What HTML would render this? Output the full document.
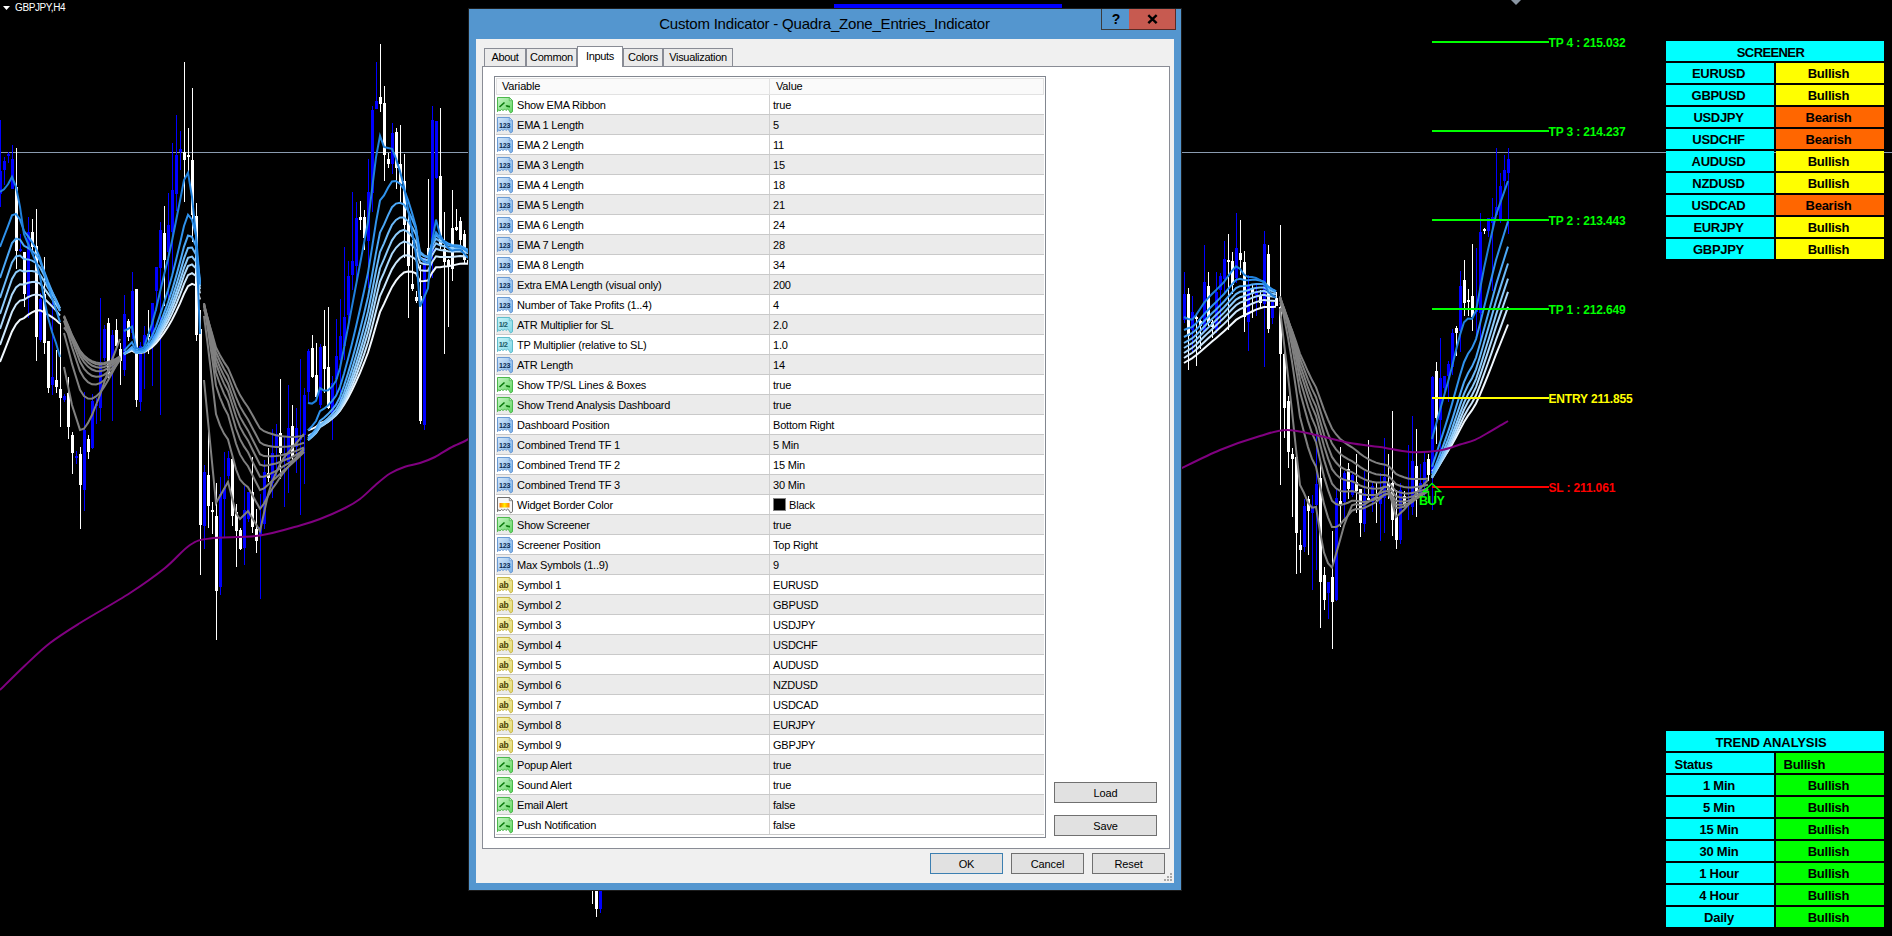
<!DOCTYPE html>
<html><head><meta charset="utf-8"><style>
html,body{margin:0;padding:0;background:#000;}
body{width:1892px;height:936px;overflow:hidden;position:relative;font-family:"Liberation Sans", sans-serif;}
</style></head><body>
<svg width="0" height="0" style="position:absolute"><defs>
<linearGradient id="gB" x1="0" y1="0" x2="1" y2="1"><stop offset="0" stop-color="#c9f5c9"/><stop offset="1" stop-color="#5fd65f"/></linearGradient>
<linearGradient id="gI" x1="0" y1="0" x2="1" y2="1"><stop offset="0" stop-color="#d6e8fa"/><stop offset="1" stop-color="#79aee6"/></linearGradient>
<linearGradient id="gD" x1="0" y1="0" x2="1" y2="1"><stop offset="0" stop-color="#c8f4f8"/><stop offset="1" stop-color="#7fd6e6"/></linearGradient>
<linearGradient id="gS" x1="0" y1="0" x2="1" y2="1"><stop offset="0" stop-color="#fbf6b8"/><stop offset="1" stop-color="#e2d670"/></linearGradient>
<linearGradient id="gC" x1="0" y1="0" x2="1" y2="0"><stop offset="0" stop-color="#ff7a00"/><stop offset=".5" stop-color="#ffee00"/><stop offset="1" stop-color="#ff7a00"/></linearGradient>
</defs></svg>
<svg width="1892" height="936" style="position:absolute;left:0;top:0"><rect x="0" y="152" width="1892" height="1" fill="#8a9bb0"/><rect x="0" y="120" width="1" height="87" fill="#0000ff"/><rect x="-1" y="171" width="3" height="23" fill="#0000ff"/><rect x="4" y="157" width="1" height="28" fill="#0000ff"/><rect x="3" y="161" width="3" height="9" fill="#0000ff"/><rect x="8" y="152" width="1" height="11" fill="#0000ff"/><rect x="7" y="154" width="3" height="2" fill="#0000ff"/><rect x="12" y="145" width="1" height="44" fill="#0000ff"/><rect x="11" y="159" width="3" height="30" fill="#0000ff"/><rect x="16" y="148" width="1" height="121" fill="#ffffff"/><rect x="15" y="187" width="3" height="64" fill="#ffffff"/><rect x="20" y="234" width="1" height="18" fill="#0000ff"/><rect x="19" y="249" width="3" height="2" fill="#0000ff"/><rect x="24" y="252" width="1" height="55" fill="#ffffff"/><rect x="23" y="252" width="3" height="42" fill="#ffffff"/><rect x="28" y="217" width="1" height="101" fill="#0000ff"/><rect x="27" y="232" width="3" height="66" fill="#0000ff"/><rect x="32" y="219" width="1" height="33" fill="#ffffff"/><rect x="31" y="232" width="3" height="15" fill="#ffffff"/><rect x="36" y="209" width="1" height="152" fill="#ffffff"/><rect x="35" y="246" width="3" height="91" fill="#ffffff"/><rect x="40" y="293" width="1" height="49" fill="#0000ff"/><rect x="39" y="299" width="3" height="41" fill="#0000ff"/><rect x="44" y="257" width="1" height="97" fill="#ffffff"/><rect x="43" y="294" width="3" height="49" fill="#ffffff"/><rect x="48" y="341" width="1" height="52" fill="#ffffff"/><rect x="47" y="341" width="3" height="47" fill="#ffffff"/><rect x="52" y="298" width="1" height="97" fill="#0000ff"/><rect x="51" y="377" width="3" height="8" fill="#0000ff"/><rect x="56" y="350" width="1" height="43" fill="#ffffff"/><rect x="55" y="380" width="3" height="7" fill="#ffffff"/><rect x="60" y="323" width="1" height="104" fill="#ffffff"/><rect x="59" y="389" width="3" height="9" fill="#ffffff"/><rect x="64" y="394" width="1" height="8" fill="#0000ff"/><rect x="63" y="396" width="3" height="4" fill="#0000ff"/><rect x="68" y="377" width="1" height="62" fill="#ffffff"/><rect x="67" y="393" width="3" height="34" fill="#ffffff"/><rect x="72" y="432" width="1" height="42" fill="#ffffff"/><rect x="71" y="435" width="3" height="18" fill="#ffffff"/><rect x="76" y="451" width="1" height="13" fill="#0000ff"/><rect x="75" y="456" width="3" height="2" fill="#0000ff"/><rect x="80" y="447" width="1" height="82" fill="#ffffff"/><rect x="79" y="454" width="3" height="31" fill="#ffffff"/><rect x="84" y="392" width="1" height="119" fill="#0000ff"/><rect x="83" y="430" width="3" height="60" fill="#0000ff"/><rect x="88" y="435" width="1" height="24" fill="#ffffff"/><rect x="87" y="439" width="3" height="13" fill="#ffffff"/><rect x="92" y="394" width="1" height="55" fill="#0000ff"/><rect x="91" y="401" width="3" height="47" fill="#0000ff"/><rect x="96" y="398" width="1" height="26" fill="#0000ff"/><rect x="95" y="404" width="3" height="2" fill="#0000ff"/><rect x="100" y="298" width="1" height="123" fill="#0000ff"/><rect x="99" y="362" width="3" height="46" fill="#0000ff"/><rect x="104" y="325" width="1" height="36" fill="#0000ff"/><rect x="103" y="329" width="3" height="29" fill="#0000ff"/><rect x="108" y="318" width="1" height="60" fill="#ffffff"/><rect x="107" y="323" width="3" height="50" fill="#ffffff"/><rect x="112" y="330" width="1" height="91" fill="#0000ff"/><rect x="111" y="335" width="3" height="27" fill="#0000ff"/><rect x="116" y="319" width="1" height="29" fill="#ffffff"/><rect x="115" y="330" width="3" height="16" fill="#ffffff"/><rect x="120" y="343" width="1" height="42" fill="#ffffff"/><rect x="119" y="349" width="3" height="12" fill="#ffffff"/><rect x="124" y="295" width="1" height="81" fill="#0000ff"/><rect x="123" y="314" width="3" height="56" fill="#0000ff"/><rect x="128" y="319" width="1" height="22" fill="#ffffff"/><rect x="127" y="321" width="3" height="16" fill="#ffffff"/><rect x="132" y="272" width="1" height="67" fill="#0000ff"/><rect x="131" y="291" width="3" height="42" fill="#0000ff"/><rect x="136" y="289" width="1" height="118" fill="#ffffff"/><rect x="135" y="289" width="3" height="111" fill="#ffffff"/><rect x="140" y="342" width="1" height="69" fill="#0000ff"/><rect x="139" y="346" width="3" height="56" fill="#0000ff"/><rect x="144" y="326" width="1" height="63" fill="#0000ff"/><rect x="143" y="335" width="3" height="10" fill="#0000ff"/><rect x="148" y="310" width="1" height="44" fill="#ffffff"/><rect x="147" y="334" width="3" height="3" fill="#ffffff"/><rect x="152" y="303" width="1" height="83" fill="#0000ff"/><rect x="151" y="303" width="3" height="34" fill="#0000ff"/><rect x="156" y="267" width="1" height="44" fill="#0000ff"/><rect x="155" y="267" width="3" height="24" fill="#0000ff"/><rect x="160" y="222" width="1" height="193" fill="#0000ff"/><rect x="159" y="230" width="3" height="38" fill="#0000ff"/><rect x="164" y="206" width="1" height="100" fill="#ffffff"/><rect x="163" y="233" width="3" height="27" fill="#ffffff"/><rect x="168" y="193" width="1" height="108" fill="#0000ff"/><rect x="167" y="225" width="3" height="27" fill="#0000ff"/><rect x="172" y="143" width="1" height="129" fill="#0000ff"/><rect x="171" y="190" width="3" height="42" fill="#0000ff"/><rect x="176" y="115" width="1" height="96" fill="#0000ff"/><rect x="175" y="155" width="3" height="39" fill="#0000ff"/><rect x="180" y="131" width="1" height="39" fill="#0000ff"/><rect x="179" y="149" width="3" height="3" fill="#0000ff"/><rect x="184" y="62" width="1" height="140" fill="#ffffff"/><rect x="183" y="152" width="3" height="8" fill="#ffffff"/><rect x="188" y="128" width="1" height="46" fill="#ffffff"/><rect x="187" y="155" width="3" height="2" fill="#ffffff"/><rect x="192" y="88" width="1" height="154" fill="#ffffff"/><rect x="191" y="160" width="3" height="55" fill="#ffffff"/><rect x="196" y="203" width="1" height="138" fill="#ffffff"/><rect x="195" y="216" width="3" height="119" fill="#ffffff"/><rect x="200" y="310" width="1" height="265" fill="#ffffff"/><rect x="199" y="329" width="3" height="196" fill="#ffffff"/><rect x="204" y="465" width="1" height="84" fill="#0000ff"/><rect x="203" y="472" width="3" height="54" fill="#0000ff"/><rect x="208" y="428" width="1" height="100" fill="#ffffff"/><rect x="207" y="475" width="3" height="31" fill="#ffffff"/><rect x="212" y="502" width="1" height="32" fill="#ffffff"/><rect x="211" y="510" width="3" height="2" fill="#ffffff"/><rect x="216" y="483" width="1" height="157" fill="#ffffff"/><rect x="215" y="516" width="3" height="75" fill="#ffffff"/><rect x="220" y="477" width="1" height="118" fill="#0000ff"/><rect x="219" y="494" width="3" height="93" fill="#0000ff"/><rect x="224" y="452" width="1" height="85" fill="#0000ff"/><rect x="223" y="488" width="3" height="11" fill="#0000ff"/><rect x="228" y="451" width="1" height="28" fill="#0000ff"/><rect x="227" y="458" width="3" height="18" fill="#0000ff"/><rect x="232" y="454" width="1" height="72" fill="#ffffff"/><rect x="231" y="459" width="3" height="57" fill="#ffffff"/><rect x="236" y="504" width="1" height="63" fill="#ffffff"/><rect x="235" y="512" width="3" height="19" fill="#ffffff"/><rect x="240" y="528" width="1" height="22" fill="#ffffff"/><rect x="239" y="530" width="3" height="19" fill="#ffffff"/><rect x="244" y="486" width="1" height="79" fill="#0000ff"/><rect x="243" y="510" width="3" height="38" fill="#0000ff"/><rect x="248" y="492" width="1" height="30" fill="#0000ff"/><rect x="247" y="492" width="3" height="27" fill="#0000ff"/><rect x="252" y="457" width="1" height="76" fill="#ffffff"/><rect x="251" y="492" width="3" height="35" fill="#ffffff"/><rect x="256" y="509" width="1" height="44" fill="#ffffff"/><rect x="255" y="529" width="3" height="12" fill="#ffffff"/><rect x="260" y="494" width="1" height="105" fill="#0000ff"/><rect x="259" y="527" width="3" height="8" fill="#0000ff"/><rect x="264" y="460" width="1" height="69" fill="#0000ff"/><rect x="263" y="472" width="3" height="52" fill="#0000ff"/><rect x="268" y="448" width="1" height="34" fill="#ffffff"/><rect x="267" y="473" width="3" height="5" fill="#ffffff"/><rect x="272" y="429" width="1" height="69" fill="#0000ff"/><rect x="271" y="453" width="3" height="30" fill="#0000ff"/><rect x="276" y="424" width="1" height="54" fill="#0000ff"/><rect x="275" y="434" width="3" height="13" fill="#0000ff"/><rect x="280" y="379" width="1" height="100" fill="#ffffff"/><rect x="279" y="433" width="3" height="20" fill="#ffffff"/><rect x="284" y="437" width="1" height="70" fill="#0000ff"/><rect x="283" y="457" width="3" height="2" fill="#0000ff"/><rect x="288" y="385" width="1" height="108" fill="#0000ff"/><rect x="287" y="428" width="3" height="34" fill="#0000ff"/><rect x="292" y="405" width="1" height="56" fill="#ffffff"/><rect x="291" y="426" width="3" height="31" fill="#ffffff"/><rect x="296" y="408" width="1" height="65" fill="#0000ff"/><rect x="295" y="428" width="3" height="19" fill="#0000ff"/><rect x="300" y="359" width="1" height="156" fill="#0000ff"/><rect x="299" y="438" width="3" height="2" fill="#0000ff"/><rect x="304" y="388" width="1" height="96" fill="#0000ff"/><rect x="303" y="395" width="3" height="40" fill="#0000ff"/><rect x="308" y="349" width="1" height="54" fill="#0000ff"/><rect x="307" y="351" width="3" height="41" fill="#0000ff"/><rect x="312" y="335" width="1" height="43" fill="#ffffff"/><rect x="311" y="348" width="3" height="29" fill="#ffffff"/><rect x="316" y="343" width="1" height="58" fill="#ffffff"/><rect x="315" y="375" width="3" height="22" fill="#ffffff"/><rect x="320" y="344" width="1" height="64" fill="#0000ff"/><rect x="319" y="347" width="3" height="58" fill="#0000ff"/><rect x="324" y="310" width="1" height="83" fill="#ffffff"/><rect x="323" y="346" width="3" height="23" fill="#ffffff"/><rect x="328" y="307" width="1" height="102" fill="#ffffff"/><rect x="327" y="367" width="3" height="41" fill="#ffffff"/><rect x="332" y="376" width="1" height="64" fill="#0000ff"/><rect x="331" y="383" width="3" height="31" fill="#0000ff"/><rect x="336" y="319" width="1" height="76" fill="#0000ff"/><rect x="335" y="356" width="3" height="23" fill="#0000ff"/><rect x="340" y="299" width="1" height="108" fill="#0000ff"/><rect x="339" y="336" width="3" height="24" fill="#0000ff"/><rect x="344" y="247" width="1" height="113" fill="#0000ff"/><rect x="343" y="317" width="3" height="29" fill="#0000ff"/><rect x="348" y="261" width="1" height="68" fill="#0000ff"/><rect x="347" y="276" width="3" height="39" fill="#0000ff"/><rect x="352" y="192" width="1" height="98" fill="#0000ff"/><rect x="351" y="261" width="3" height="14" fill="#0000ff"/><rect x="356" y="202" width="1" height="78" fill="#0000ff"/><rect x="355" y="218" width="3" height="48" fill="#0000ff"/><rect x="360" y="201" width="1" height="29" fill="#ffffff"/><rect x="359" y="217" width="3" height="3" fill="#ffffff"/><rect x="364" y="210" width="1" height="40" fill="#ffffff"/><rect x="363" y="217" width="3" height="21" fill="#ffffff"/><rect x="368" y="159" width="1" height="129" fill="#0000ff"/><rect x="367" y="192" width="3" height="49" fill="#0000ff"/><rect x="372" y="106" width="1" height="106" fill="#0000ff"/><rect x="371" y="110" width="3" height="83" fill="#0000ff"/><rect x="376" y="62" width="1" height="47" fill="#0000ff"/><rect x="375" y="101" width="3" height="8" fill="#0000ff"/><rect x="380" y="44" width="1" height="68" fill="#ffffff"/><rect x="379" y="97" width="3" height="7" fill="#ffffff"/><rect x="384" y="86" width="1" height="95" fill="#ffffff"/><rect x="383" y="103" width="3" height="52" fill="#ffffff"/><rect x="388" y="153" width="1" height="15" fill="#ffffff"/><rect x="387" y="159" width="3" height="5" fill="#ffffff"/><rect x="392" y="123" width="1" height="51" fill="#0000ff"/><rect x="391" y="133" width="3" height="31" fill="#0000ff"/><rect x="396" y="128" width="1" height="61" fill="#ffffff"/><rect x="395" y="132" width="3" height="36" fill="#ffffff"/><rect x="400" y="125" width="1" height="77" fill="#ffffff"/><rect x="399" y="164" width="3" height="20" fill="#ffffff"/><rect x="404" y="154" width="1" height="104" fill="#ffffff"/><rect x="403" y="181" width="3" height="44" fill="#ffffff"/><rect x="408" y="215" width="1" height="103" fill="#ffffff"/><rect x="407" y="222" width="3" height="44" fill="#ffffff"/><rect x="412" y="240" width="1" height="51" fill="#ffffff"/><rect x="411" y="284" width="3" height="5" fill="#ffffff"/><rect x="416" y="291" width="1" height="12" fill="#ffffff"/><rect x="415" y="297" width="3" height="4" fill="#ffffff"/><rect x="420" y="265" width="1" height="159" fill="#ffffff"/><rect x="419" y="296" width="3" height="125" fill="#ffffff"/><rect x="424" y="258" width="1" height="172" fill="#0000ff"/><rect x="423" y="258" width="3" height="167" fill="#0000ff"/><rect x="428" y="179" width="1" height="78" fill="#ffffff"/><rect x="427" y="248" width="3" height="7" fill="#ffffff"/><rect x="432" y="106" width="1" height="172" fill="#0000ff"/><rect x="431" y="120" width="3" height="135" fill="#0000ff"/><rect x="436" y="150" width="1" height="29" fill="#0000ff"/><rect x="435" y="121" width="3" height="57" fill="#0000ff"/><rect x="440" y="108" width="1" height="141" fill="#ffffff"/><rect x="439" y="176" width="3" height="70" fill="#ffffff"/><rect x="444" y="212" width="1" height="142" fill="#ffffff"/><rect x="443" y="249" width="3" height="13" fill="#ffffff"/><rect x="448" y="259" width="1" height="68" fill="#ffffff"/><rect x="447" y="260" width="3" height="6" fill="#ffffff"/><rect x="452" y="190" width="1" height="91" fill="#ffffff"/><rect x="451" y="228" width="3" height="41" fill="#ffffff"/><rect x="456" y="209" width="1" height="22" fill="#ffffff"/><rect x="455" y="227" width="3" height="3" fill="#ffffff"/><rect x="460" y="217" width="1" height="35" fill="#ffffff"/><rect x="459" y="221" width="3" height="19" fill="#ffffff"/><rect x="464" y="230" width="1" height="34" fill="#ffffff"/><rect x="463" y="234" width="3" height="26" fill="#ffffff"/><rect x="468" y="215" width="1" height="80" fill="#ffffff"/><rect x="467" y="260" width="3" height="3" fill="#ffffff"/><rect x="472" y="233" width="1" height="38" fill="#ffffff"/><rect x="471" y="253" width="3" height="8" fill="#ffffff"/><path d="M0.0,362.0 L4.0,351.8 L8.0,341.7 L12.0,331.4 L16.0,324.3 L20.0,319.9 L24.0,318.1 L28.0,314.9 L32.0,312.4 L36.0,310.6 L40.0,310.3 L44.0,312.1 L48.0,314.6 L52.0,317.2 L56.0,320.0 L60.0,323.7" stroke="#f2f9ff" stroke-width="2" fill="none"/><path d="M0.0,345.0 L4.0,333.9 L8.0,322.9 L12.0,311.8 L16.0,304.5 L20.0,300.6 L24.0,299.8 L28.0,297.2 L32.0,295.4 L36.0,294.4 L40.0,295.1 L44.0,298.3 L48.0,302.3 L52.0,306.3 L56.0,310.4 L60.0,315.5" stroke="#cde8fd" stroke-width="2" fill="none"/><path d="M0.0,329.0 L4.0,317.4 L8.0,305.9 L12.0,294.4 L16.0,287.4 L20.0,284.2 L24.0,284.6 L28.0,282.8 L32.0,281.9 L36.0,281.8 L40.0,283.6 L44.0,288.2 L48.0,293.7 L52.0,299.0 L56.0,304.3 L60.0,310.8" stroke="#acd9fc" stroke-width="2" fill="none"/><path d="M0.0,314.0 L4.0,302.2 L8.0,290.5 L12.0,278.9 L16.0,272.3 L20.0,270.0 L24.0,271.7 L28.0,270.9 L32.0,270.9 L36.0,271.8 L40.0,274.8 L44.0,280.9 L48.0,287.7 L52.0,294.3 L56.0,300.8 L60.0,308.4" stroke="#8ccbfb" stroke-width="2" fill="none"/><path d="M0.0,298.0 L4.0,286.0 L8.0,274.2 L12.0,262.4 L16.0,256.5 L20.0,255.5 L24.0,259.1 L28.0,259.4 L32.0,260.6 L36.0,262.8 L40.0,267.2 L44.0,275.0 L48.0,283.6 L52.0,291.7 L56.0,299.4 L60.0,308.4" stroke="#6cbaf9" stroke-width="2" fill="none"/><path d="M0.0,278.0 L4.0,266.2 L8.0,254.7 L12.0,243.1 L16.0,238.6 L20.0,239.6 L24.0,245.8 L28.0,247.9 L32.0,250.8 L36.0,254.5 L40.0,260.8 L44.0,270.9 L48.0,281.6 L52.0,291.4 L56.0,300.7 L60.0,311.2" stroke="#4ba7f6" stroke-width="2" fill="none"/><path d="M0.0,247.0 L4.0,236.5 L8.0,226.1 L12.0,215.4 L16.0,213.9 L20.0,219.5 L24.0,231.1 L28.0,236.2 L32.0,242.1 L36.0,248.6 L40.0,257.9 L44.0,271.9 L48.0,285.9 L52.0,298.3 L56.0,309.5 L60.0,322.1" stroke="#2f92ec" stroke-width="2" fill="none"/><path d="M0.0,192.0 L4.0,189.3 L8.0,184.3 L12.0,176.9 L16.0,186.8 L20.0,206.9 L24.0,234.3 L28.0,243.5 L32.0,252.8 L36.0,262.2 L40.0,276.2 L44.0,298.1 L48.0,317.5 L52.0,331.8 L56.0,343.0 L60.0,357.0" stroke="#1f80dc" stroke-width="2" fill="none"/><path d="M64.0,327.3 L68.0,332.8 L72.0,339.1 L76.0,345.0 L80.0,351.3 L84.0,355.6 L88.0,358.8 L92.0,361.1 L96.0,362.4 L100.0,363.2 L104.0,362.9 L108.0,362.0 L112.0,360.6 L116.0,358.8 L120.0,356.5" stroke="#808080" stroke-width="2" fill="none"/><path d="M64.0,320.5 L68.0,327.6 L72.0,335.6 L76.0,342.9 L80.0,350.6 L84.0,355.9 L88.0,359.7 L92.0,362.4 L96.0,364.0 L100.0,364.7 L104.0,364.3 L108.0,363.1 L112.0,361.4 L116.0,359.1 L120.0,356.3" stroke="#808080" stroke-width="2" fill="none"/><path d="M64.0,316.9 L68.0,325.5 L72.0,334.9 L76.0,343.5 L80.0,352.4 L84.0,358.3 L88.0,362.5 L92.0,365.5 L96.0,367.0 L100.0,367.7 L104.0,367.0 L108.0,365.4 L112.0,363.1 L116.0,360.4 L120.0,357.0" stroke="#808080" stroke-width="2" fill="none"/><path d="M64.0,315.6 L68.0,325.4 L72.0,336.1 L76.0,345.8 L80.0,355.7 L84.0,362.1 L88.0,366.6 L92.0,369.5 L96.0,371.0 L100.0,371.3 L104.0,370.2 L108.0,368.1 L112.0,365.3 L116.0,362.0 L120.0,358.0" stroke="#808080" stroke-width="2" fill="none"/><path d="M64.0,316.7 L68.0,328.0 L72.0,340.1 L76.0,350.9 L80.0,361.8 L84.0,368.6 L88.0,373.1 L92.0,375.8 L96.0,376.8 L100.0,376.6 L104.0,374.8 L108.0,371.8 L112.0,368.2 L116.0,364.0 L120.0,359.2" stroke="#808080" stroke-width="2" fill="none"/><path d="M64.0,320.7 L68.0,333.6 L72.0,347.3 L76.0,359.2 L80.0,371.1 L84.0,378.0 L88.0,382.2 L92.0,384.3 L96.0,384.4 L100.0,383.2 L104.0,380.2 L108.0,376.0 L112.0,371.2 L116.0,365.9 L120.0,359.9" stroke="#808080" stroke-width="2" fill="none"/><path d="M64.0,332.9 L68.0,348.1 L72.0,363.9 L76.0,377.0 L80.0,389.9 L84.0,396.0 L88.0,398.6 L92.0,398.7 L96.0,396.4 L100.0,392.8 L104.0,387.2 L108.0,380.5 L112.0,373.3 L116.0,365.9 L120.0,357.9" stroke="#808080" stroke-width="2" fill="none"/><path d="M64.0,367.0 L68.0,386.0 L72.0,405.0 L76.0,417.4 L80.0,429.9 L84.0,428.7 L88.0,422.9 L92.0,415.0 L96.0,405.0 L100.0,395.0 L104.0,383.0 L108.0,371.0 L112.0,359.8 L116.0,349.4 L120.0,339.0" stroke="#808080" stroke-width="2" fill="none"/><path d="M124.0,354.1 L128.0,352.4 L132.0,350.7 L136.0,353.0 L140.0,352.9 L144.0,352.3 L148.0,350.0 L152.0,347.2 L156.0,343.4 L160.0,338.4 L164.0,332.9 L168.0,326.8 L172.0,319.9 L176.0,311.9 L180.0,303.3 L184.0,293.9 L188.0,286.1 L192.0,283.8 L196.0,285.4 L200.0,299.4" stroke="#f2f9ff" stroke-width="2" fill="none"/><path d="M124.0,353.4 L128.0,351.4 L132.0,349.4 L136.0,352.3 L140.0,352.2 L144.0,351.6 L148.0,348.9 L152.0,345.5 L156.0,341.0 L160.0,335.3 L164.0,328.8 L168.0,321.7 L172.0,313.7 L176.0,304.5 L180.0,294.6 L184.0,283.8 L188.0,275.2 L192.0,273.1 L196.0,275.8 L200.0,293.4" stroke="#cde8fd" stroke-width="2" fill="none"/><path d="M124.0,353.6 L128.0,351.3 L132.0,349.0 L136.0,352.3 L140.0,352.2 L144.0,351.5 L148.0,348.4 L152.0,344.5 L156.0,339.4 L160.0,332.8 L164.0,325.5 L168.0,317.6 L172.0,308.6 L176.0,298.4 L180.0,287.4 L184.0,275.4 L188.0,266.1 L192.0,264.4 L196.0,268.2 L200.0,289.3" stroke="#acd9fc" stroke-width="2" fill="none"/><path d="M124.0,354.1 L128.0,351.4 L132.0,348.7 L136.0,352.5 L140.0,352.4 L144.0,351.6 L148.0,348.0 L152.0,343.7 L156.0,337.9 L160.0,330.6 L164.0,322.5 L168.0,313.8 L172.0,303.9 L176.0,292.7 L180.0,280.7 L184.0,267.8 L188.0,257.8 L192.0,256.6 L196.0,261.7 L200.0,286.2" stroke="#8ccbfb" stroke-width="2" fill="none"/><path d="M124.0,354.6 L128.0,351.4 L132.0,348.3 L136.0,352.8 L140.0,352.6 L144.0,351.6 L148.0,347.5 L152.0,342.5 L156.0,336.0 L160.0,327.7 L164.0,318.6 L168.0,308.9 L172.0,298.0 L176.0,285.7 L180.0,272.5 L184.0,258.4 L188.0,247.9 L192.0,247.5 L196.0,254.4 L200.0,283.5" stroke="#6cbaf9" stroke-width="2" fill="none"/><path d="M124.0,354.3 L128.0,350.6 L132.0,347.0 L136.0,352.5 L140.0,352.4 L144.0,351.2 L148.0,346.3 L152.0,340.6 L156.0,333.1 L160.0,323.6 L164.0,313.3 L168.0,302.5 L172.0,290.3 L176.0,276.6 L180.0,262.1 L184.0,246.6 L188.0,235.6 L192.0,236.8 L196.0,246.2 L200.0,281.9" stroke="#4ba7f6" stroke-width="2" fill="none"/><path d="M124.0,350.8 L128.0,346.4 L132.0,342.3 L136.0,350.4 L140.0,350.6 L144.0,349.3 L148.0,343.1 L152.0,336.0 L156.0,326.8 L160.0,315.2 L164.0,302.8 L168.0,290.2 L172.0,276.0 L176.0,260.2 L180.0,243.5 L184.0,226.0 L188.0,214.7 L192.0,219.7 L196.0,235.2 L200.0,284.5" stroke="#2f92ec" stroke-width="2" fill="none"/><path d="M124.0,331.0 L128.0,328.8 L132.0,326.6 L136.0,348.0 L140.0,349.1 L144.0,347.1 L148.0,335.5 L152.0,323.8 L156.0,309.3 L160.0,292.0 L164.0,275.0 L168.0,259.0 L172.0,241.0 L176.0,221.0 L180.0,200.8 L184.0,180.0 L188.0,172.8 L192.0,196.8 L196.0,235.3 L200.0,334.0" stroke="#1f80dc" stroke-width="2" fill="none"/><path d="M204.0,309.3 L208.0,320.4 L212.0,333.2 L216.0,347.5 L220.0,355.2 L224.0,362.1 L228.0,368.1 L232.0,377.3 L236.0,386.9 L240.0,395.1 L244.0,401.5 L248.0,407.3 L252.0,414.3 L256.0,421.4 L260.0,428.4 L264.0,431.2 L268.0,432.8 L272.0,434.0 L276.0,435.3 L280.0,436.0 L284.0,436.4 L288.0,436.8 L292.0,436.9 L296.0,436.8 L300.0,436.3 L304.0,435.7" stroke="#808080" stroke-width="2" fill="none"/><path d="M204.0,305.7 L208.0,319.3 L212.0,334.8 L216.0,352.1 L220.0,361.0 L224.0,368.9 L228.0,375.7 L232.0,386.3 L236.0,397.2 L240.0,406.4 L244.0,413.3 L248.0,419.5 L252.0,427.2 L256.0,434.8 L260.0,442.4 L264.0,444.8 L268.0,445.7 L272.0,446.4 L276.0,447.0 L280.0,447.0 L284.0,446.8 L288.0,446.6 L292.0,446.1 L296.0,445.2 L300.0,444.1 L304.0,442.8" stroke="#808080" stroke-width="2" fill="none"/><path d="M204.0,303.9 L208.0,319.8 L212.0,337.7 L216.0,357.5 L220.0,367.5 L224.0,376.1 L228.0,383.4 L232.0,395.1 L236.0,407.0 L240.0,416.9 L244.0,424.1 L248.0,430.4 L252.0,438.5 L256.0,446.4 L260.0,454.2 L264.0,456.1 L268.0,456.3 L272.0,456.2 L276.0,456.1 L280.0,455.4 L284.0,454.5 L288.0,453.6 L292.0,452.4 L296.0,451.0 L300.0,449.2 L304.0,447.3" stroke="#808080" stroke-width="2" fill="none"/><path d="M204.0,303.1 L208.0,321.3 L212.0,341.5 L216.0,363.7 L220.0,374.4 L224.0,383.6 L228.0,391.2 L232.0,403.7 L236.0,416.5 L240.0,426.9 L244.0,434.2 L248.0,440.4 L252.0,448.7 L256.0,456.8 L260.0,464.7 L264.0,465.8 L268.0,465.2 L272.0,464.3 L276.0,463.5 L280.0,462.0 L284.0,460.4 L288.0,458.8 L292.0,457.0 L296.0,454.9 L300.0,452.6 L304.0,450.0" stroke="#808080" stroke-width="2" fill="none"/><path d="M204.0,303.4 L208.0,324.4 L212.0,347.5 L216.0,372.5 L220.0,384.0 L224.0,393.6 L228.0,401.4 L232.0,414.8 L236.0,428.5 L240.0,439.2 L244.0,446.4 L248.0,452.3 L252.0,460.6 L256.0,468.7 L260.0,476.7 L264.0,476.7 L268.0,474.8 L272.0,472.8 L276.0,471.0 L280.0,468.4 L284.0,465.9 L288.0,463.5 L292.0,460.9 L296.0,458.1 L300.0,455.1 L304.0,451.8" stroke="#808080" stroke-width="2" fill="none"/><path d="M204.0,305.6 L208.0,330.3 L212.0,357.0 L216.0,385.5 L220.0,397.6 L224.0,407.2 L228.0,414.8 L232.0,429.1 L236.0,443.5 L240.0,454.4 L244.0,461.0 L248.0,466.2 L252.0,474.3 L256.0,482.2 L260.0,490.0 L264.0,488.4 L268.0,484.7 L272.0,481.0 L276.0,477.8 L280.0,474.0 L284.0,470.3 L288.0,466.9 L292.0,463.4 L296.0,459.7 L300.0,455.9 L304.0,452.0" stroke="#808080" stroke-width="2" fill="none"/><path d="M204.0,315.8 L208.0,347.0 L212.0,379.8 L216.0,414.0 L220.0,425.4 L224.0,433.6 L228.0,439.4 L232.0,454.3 L236.0,469.3 L240.0,479.5 L244.0,484.1 L248.0,487.2 L252.0,494.5 L256.0,501.7 L260.0,508.8 L264.0,503.5 L268.0,496.1 L272.0,489.2 L276.0,483.7 L280.0,477.5 L284.0,472.0 L288.0,467.2 L292.0,462.5 L296.0,457.7 L300.0,453.0 L304.0,448.3" stroke="#808080" stroke-width="2" fill="none"/><path d="M204.0,380.0 L208.0,421.0 L212.0,462.0 L216.0,503.0 L220.0,496.0 L224.0,489.0 L228.0,482.0 L232.0,497.6 L236.0,513.2 L240.0,519.0 L244.0,515.0 L248.0,511.0 L252.0,517.7 L256.0,524.3 L260.0,531.0 L264.0,513.0 L268.0,495.0 L272.0,481.7 L276.0,473.0 L280.0,464.3 L284.0,457.6 L288.0,452.9 L292.0,448.2 L296.0,443.5 L300.0,438.7 L304.0,434.0" stroke="#808080" stroke-width="2" fill="none"/><path d="M308.0,430.3 L312.0,428.8 L316.0,426.9 L320.0,423.2 L324.0,421.6 L328.0,419.8 L332.0,417.5 L336.0,414.7 L340.0,410.6 L344.0,404.7 L348.0,398.0 L352.0,390.3 L356.0,381.9 L360.0,372.8 L364.0,363.0 L368.0,352.5 L372.0,339.5 L376.0,325.4 L380.0,312.1 L384.0,303.9 L388.0,295.1 L392.0,286.9 L396.0,280.7 L400.0,275.9 L404.0,272.5 L408.0,271.5 L412.0,271.7 L416.0,273.3 L420.0,281.2 L424.0,281.1 L428.0,280.5 L432.0,272.9 L436.0,267.3 L440.0,267.2 L444.0,266.6 L448.0,266.2 L452.0,265.6 L456.0,264.6 L460.0,263.7 L464.0,263.6 L468.0,263.7 L472.0,264.1" stroke="#f2f9ff" stroke-width="2" fill="none"/><path d="M308.0,435.8 L312.0,433.6 L316.0,431.0 L320.0,426.2 L324.0,424.2 L328.0,421.8 L332.0,418.8 L336.0,415.4 L340.0,410.4 L344.0,403.3 L348.0,395.2 L352.0,386.2 L356.0,376.4 L360.0,365.7 L364.0,354.3 L368.0,342.3 L372.0,327.3 L376.0,311.1 L380.0,296.1 L384.0,287.3 L388.0,277.8 L392.0,269.1 L396.0,262.8 L400.0,258.3 L404.0,255.4 L408.0,255.3 L412.0,256.8 L416.0,259.7 L420.0,270.2 L424.0,270.8 L428.0,270.7 L432.0,262.3 L436.0,256.3 L440.0,256.9 L444.0,256.9 L448.0,257.1 L452.0,257.0 L456.0,256.4 L460.0,255.9 L464.0,256.3 L468.0,256.9 L472.0,257.9" stroke="#cde8fd" stroke-width="2" fill="none"/><path d="M308.0,438.8 L312.0,436.0 L316.0,432.8 L320.0,427.1 L324.0,424.7 L328.0,421.8 L332.0,418.4 L336.0,414.5 L340.0,408.7 L344.0,400.7 L348.0,391.5 L352.0,381.4 L356.0,370.3 L360.0,358.4 L364.0,345.8 L368.0,332.5 L372.0,315.9 L376.0,298.1 L380.0,281.6 L384.0,272.7 L388.0,262.8 L392.0,253.8 L396.0,247.8 L400.0,243.7 L404.0,241.6 L408.0,242.6 L412.0,245.3 L416.0,249.6 L420.0,262.6 L424.0,263.9 L428.0,264.4 L432.0,255.1 L436.0,248.7 L440.0,250.0 L444.0,250.6 L448.0,251.3 L452.0,251.7 L456.0,251.4 L460.0,251.2 L464.0,252.0 L468.0,253.1 L472.0,254.5" stroke="#acd9fc" stroke-width="2" fill="none"/><path d="M308.0,440.1 L312.0,436.9 L316.0,433.1 L320.0,426.7 L324.0,423.9 L328.0,420.8 L332.0,417.0 L336.0,412.7 L340.0,406.3 L344.0,397.3 L348.0,387.2 L352.0,376.1 L356.0,364.0 L360.0,351.1 L364.0,337.4 L368.0,323.1 L372.0,305.1 L376.0,285.8 L380.0,268.2 L384.0,259.2 L388.0,249.3 L392.0,240.3 L396.0,234.7 L400.0,231.2 L404.0,229.9 L408.0,232.1 L412.0,236.2 L416.0,241.9 L420.0,257.3 L424.0,259.3 L428.0,260.3 L432.0,250.1 L436.0,243.3 L440.0,245.3 L444.0,246.3 L448.0,247.6 L452.0,248.3 L456.0,248.3 L460.0,248.4 L464.0,249.6 L468.0,251.0 L472.0,252.8" stroke="#8ccbfb" stroke-width="2" fill="none"/><path d="M308.0,440.2 L312.0,436.4 L316.0,432.1 L320.0,424.8 L324.0,421.7 L328.0,418.3 L332.0,414.2 L336.0,409.5 L340.0,402.4 L344.0,392.5 L348.0,381.3 L352.0,369.0 L356.0,355.8 L360.0,341.7 L364.0,326.9 L368.0,311.4 L372.0,291.7 L376.0,270.8 L380.0,252.0 L384.0,243.3 L388.0,233.5 L392.0,224.8 L396.0,219.9 L400.0,217.5 L404.0,217.4 L408.0,221.3 L412.0,227.1 L416.0,234.6 L420.0,253.3 L424.0,256.0 L428.0,257.5 L432.0,246.0 L436.0,238.6 L440.0,241.4 L444.0,243.0 L448.0,244.8 L452.0,245.9 L456.0,246.1 L460.0,246.5 L464.0,248.0 L468.0,249.9 L472.0,252.1" stroke="#6cbaf9" stroke-width="2" fill="none"/><path d="M308.0,438.1 L312.0,433.9 L316.0,429.1 L320.0,420.8 L324.0,417.7 L328.0,414.1 L332.0,409.8 L336.0,404.7 L340.0,396.9 L344.0,385.8 L348.0,373.4 L352.0,359.8 L356.0,345.2 L360.0,329.8 L364.0,313.7 L368.0,296.9 L372.0,275.4 L376.0,252.6 L380.0,232.6 L384.0,224.7 L388.0,215.3 L392.0,207.2 L396.0,203.6 L400.0,202.8 L404.0,204.6 L408.0,210.7 L412.0,219.0 L416.0,229.0 L420.0,251.8 L424.0,255.3 L428.0,257.1 L432.0,243.5 L436.0,235.0 L440.0,238.7 L444.0,241.0 L448.0,243.4 L452.0,244.9 L456.0,245.3 L460.0,245.8 L464.0,247.7 L468.0,250.0 L472.0,252.6" stroke="#4ba7f6" stroke-width="2" fill="none"/><path d="M308.0,430.4 L312.0,426.1 L316.0,421.0 L320.0,411.2 L324.0,408.7 L328.0,405.4 L332.0,401.1 L336.0,395.8 L340.0,386.9 L344.0,373.7 L348.0,359.1 L352.0,343.4 L356.0,326.7 L360.0,309.2 L364.0,291.2 L368.0,272.6 L372.0,248.0 L376.0,222.1 L380.0,200.5 L384.0,195.4 L388.0,187.7 L392.0,181.5 L396.0,181.0 L400.0,183.7 L404.0,189.2 L408.0,200.0 L412.0,212.8 L416.0,227.1 L420.0,258.0 L424.0,261.5 L428.0,262.9 L432.0,243.8 L436.0,232.4 L440.0,237.8 L444.0,241.0 L448.0,244.1 L452.0,246.1 L456.0,246.4 L460.0,246.9 L464.0,249.3 L468.0,252.1 L472.0,255.2" stroke="#2f92ec" stroke-width="2" fill="none"/><path d="M308.0,403.0 L312.0,403.6 L316.0,400.8 L320.0,388.0 L324.0,390.7 L328.0,390.2 L332.0,386.7 L336.0,380.8 L340.0,368.0 L344.0,348.0 L348.0,327.4 L352.0,306.4 L356.0,285.3 L360.0,264.2 L364.0,243.1 L368.0,222.0 L372.0,189.6 L376.0,157.3 L380.0,135.8 L384.0,147.0 L388.0,147.9 L392.0,148.8 L396.0,158.6 L400.0,171.4 L404.0,186.6 L408.0,209.1 L412.0,231.5 L416.0,254.0 L420.0,306.7 L424.0,297.5 L428.0,288.3 L432.0,241.6 L436.0,219.6 L440.0,234.7 L444.0,242.1 L448.0,248.0 L452.0,250.6 L456.0,249.7 L460.0,249.6 L464.0,253.5 L468.0,257.6 L472.0,262.0" stroke="#1f80dc" stroke-width="2" fill="none"/><rect x="1184" y="272" width="1" height="51" fill="#0000ff"/><rect x="1183" y="294" width="3" height="26" fill="#0000ff"/><rect x="1188" y="288" width="1" height="82" fill="#ffffff"/><rect x="1187" y="294" width="3" height="42" fill="#ffffff"/><rect x="1192" y="296" width="1" height="56" fill="#0000ff"/><rect x="1191" y="312" width="3" height="18" fill="#0000ff"/><rect x="1196" y="313" width="1" height="53" fill="#ffffff"/><rect x="1195" y="317" width="3" height="2" fill="#ffffff"/><rect x="1200" y="319" width="1" height="30" fill="#ffffff"/><rect x="1199" y="321" width="3" height="5" fill="#ffffff"/><rect x="1204" y="245" width="1" height="86" fill="#0000ff"/><rect x="1203" y="282" width="3" height="49" fill="#0000ff"/><rect x="1208" y="272" width="1" height="54" fill="#ffffff"/><rect x="1207" y="286" width="3" height="37" fill="#ffffff"/><rect x="1212" y="320" width="1" height="18" fill="#ffffff"/><rect x="1211" y="322" width="3" height="5" fill="#ffffff"/><rect x="1216" y="272" width="1" height="61" fill="#0000ff"/><rect x="1215" y="292" width="3" height="38" fill="#0000ff"/><rect x="1220" y="273" width="1" height="51" fill="#0000ff"/><rect x="1219" y="276" width="3" height="14" fill="#0000ff"/><rect x="1224" y="241" width="1" height="51" fill="#0000ff"/><rect x="1223" y="259" width="3" height="20" fill="#0000ff"/><rect x="1228" y="234" width="1" height="96" fill="#ffffff"/><rect x="1227" y="260" width="3" height="2" fill="#ffffff"/><rect x="1232" y="252" width="1" height="42" fill="#ffffff"/><rect x="1231" y="261" width="3" height="24" fill="#ffffff"/><rect x="1236" y="213" width="1" height="70" fill="#0000ff"/><rect x="1235" y="248" width="3" height="30" fill="#0000ff"/><rect x="1240" y="220" width="1" height="55" fill="#ffffff"/><rect x="1239" y="253" width="3" height="7" fill="#ffffff"/><rect x="1244" y="251" width="1" height="81" fill="#ffffff"/><rect x="1243" y="262" width="3" height="55" fill="#ffffff"/><rect x="1248" y="275" width="1" height="76" fill="#0000ff"/><rect x="1247" y="285" width="3" height="37" fill="#0000ff"/><rect x="1252" y="285" width="1" height="33" fill="#ffffff"/><rect x="1251" y="289" width="3" height="5" fill="#ffffff"/><rect x="1256" y="285" width="1" height="31" fill="#0000ff"/><rect x="1255" y="293" width="3" height="2" fill="#0000ff"/><rect x="1260" y="290" width="1" height="19" fill="#ffffff"/><rect x="1259" y="295" width="3" height="8" fill="#ffffff"/><rect x="1264" y="231" width="1" height="136" fill="#0000ff"/><rect x="1263" y="244" width="3" height="60" fill="#0000ff"/><rect x="1268" y="245" width="1" height="88" fill="#ffffff"/><rect x="1267" y="254" width="3" height="75" fill="#ffffff"/><rect x="1272" y="302" width="1" height="22" fill="#0000ff"/><rect x="1271" y="302" width="3" height="16" fill="#0000ff"/><rect x="1276" y="292" width="1" height="13" fill="#ffffff"/><rect x="1275" y="298" width="3" height="8" fill="#ffffff"/><rect x="1280" y="225" width="1" height="260" fill="#ffffff"/><rect x="1279" y="307" width="3" height="47" fill="#ffffff"/><rect x="1284" y="346" width="1" height="92" fill="#ffffff"/><rect x="1283" y="354" width="3" height="54" fill="#ffffff"/><rect x="1288" y="396" width="1" height="72" fill="#ffffff"/><rect x="1287" y="401" width="3" height="51" fill="#ffffff"/><rect x="1292" y="448" width="1" height="69" fill="#ffffff"/><rect x="1291" y="454" width="3" height="5" fill="#ffffff"/><rect x="1296" y="450" width="1" height="124" fill="#ffffff"/><rect x="1295" y="457" width="3" height="76" fill="#ffffff"/><rect x="1300" y="530" width="1" height="43" fill="#ffffff"/><rect x="1299" y="545" width="3" height="5" fill="#ffffff"/><rect x="1304" y="499" width="1" height="53" fill="#0000ff"/><rect x="1303" y="506" width="3" height="41" fill="#0000ff"/><rect x="1308" y="496" width="1" height="59" fill="#ffffff"/><rect x="1307" y="499" width="3" height="12" fill="#ffffff"/><rect x="1312" y="495" width="1" height="95" fill="#0000ff"/><rect x="1311" y="507" width="3" height="6" fill="#0000ff"/><rect x="1316" y="433" width="1" height="137" fill="#0000ff"/><rect x="1315" y="484" width="3" height="21" fill="#0000ff"/><rect x="1320" y="460" width="1" height="168" fill="#ffffff"/><rect x="1319" y="478" width="3" height="104" fill="#ffffff"/><rect x="1324" y="567" width="1" height="43" fill="#ffffff"/><rect x="1323" y="575" width="3" height="25" fill="#ffffff"/><rect x="1328" y="582" width="1" height="37" fill="#0000ff"/><rect x="1327" y="582" width="3" height="11" fill="#0000ff"/><rect x="1332" y="531" width="1" height="118" fill="#ffffff"/><rect x="1331" y="577" width="3" height="25" fill="#ffffff"/><rect x="1336" y="488" width="1" height="113" fill="#0000ff"/><rect x="1335" y="498" width="3" height="102" fill="#0000ff"/><rect x="1340" y="447" width="1" height="80" fill="#ffffff"/><rect x="1339" y="501" width="3" height="3" fill="#ffffff"/><rect x="1344" y="471" width="1" height="47" fill="#0000ff"/><rect x="1343" y="473" width="3" height="29" fill="#0000ff"/><rect x="1348" y="463" width="1" height="36" fill="#ffffff"/><rect x="1347" y="469" width="3" height="20" fill="#ffffff"/><rect x="1352" y="472" width="1" height="25" fill="#0000ff"/><rect x="1351" y="475" width="3" height="20" fill="#0000ff"/><rect x="1356" y="454" width="1" height="59" fill="#ffffff"/><rect x="1355" y="482" width="3" height="9" fill="#ffffff"/><rect x="1360" y="489" width="1" height="48" fill="#ffffff"/><rect x="1359" y="489" width="3" height="34" fill="#ffffff"/><rect x="1364" y="471" width="1" height="61" fill="#0000ff"/><rect x="1363" y="493" width="3" height="31" fill="#0000ff"/><rect x="1368" y="440" width="1" height="60" fill="#ffffff"/><rect x="1367" y="498" width="3" height="2" fill="#ffffff"/><rect x="1372" y="481" width="1" height="31" fill="#0000ff"/><rect x="1371" y="486" width="3" height="16" fill="#0000ff"/><rect x="1376" y="483" width="1" height="40" fill="#ffffff"/><rect x="1375" y="497" width="3" height="2" fill="#ffffff"/><rect x="1380" y="473" width="1" height="68" fill="#0000ff"/><rect x="1379" y="492" width="3" height="12" fill="#0000ff"/><rect x="1384" y="438" width="1" height="95" fill="#0000ff"/><rect x="1383" y="477" width="3" height="21" fill="#0000ff"/><rect x="1388" y="454" width="1" height="45" fill="#ffffff"/><rect x="1387" y="483" width="3" height="7" fill="#ffffff"/><rect x="1392" y="411" width="1" height="125" fill="#ffffff"/><rect x="1391" y="483" width="3" height="37" fill="#ffffff"/><rect x="1396" y="490" width="1" height="59" fill="#ffffff"/><rect x="1395" y="516" width="3" height="24" fill="#ffffff"/><rect x="1400" y="483" width="1" height="61" fill="#0000ff"/><rect x="1399" y="490" width="3" height="50" fill="#0000ff"/><rect x="1404" y="491" width="1" height="16" fill="#ffffff"/><rect x="1403" y="496" width="3" height="9" fill="#ffffff"/><rect x="1408" y="445" width="1" height="75" fill="#0000ff"/><rect x="1407" y="500" width="3" height="2" fill="#0000ff"/><rect x="1412" y="416" width="1" height="99" fill="#0000ff"/><rect x="1411" y="461" width="3" height="46" fill="#0000ff"/><rect x="1416" y="429" width="1" height="88" fill="#ffffff"/><rect x="1415" y="466" width="3" height="33" fill="#ffffff"/><rect x="1420" y="464" width="1" height="36" fill="#0000ff"/><rect x="1419" y="483" width="3" height="11" fill="#0000ff"/><rect x="1424" y="452" width="1" height="44" fill="#0000ff"/><rect x="1423" y="462" width="3" height="24" fill="#0000ff"/><rect x="1428" y="454" width="1" height="27" fill="#ffffff"/><rect x="1427" y="459" width="3" height="16" fill="#ffffff"/><rect x="1432" y="376" width="1" height="134" fill="#0000ff"/><rect x="1431" y="377" width="3" height="96" fill="#0000ff"/><rect x="1436" y="362" width="1" height="82" fill="#ffffff"/><rect x="1435" y="371" width="3" height="47" fill="#ffffff"/><rect x="1440" y="338" width="1" height="118" fill="#0000ff"/><rect x="1439" y="378" width="3" height="42" fill="#0000ff"/><rect x="1444" y="376" width="1" height="19" fill="#0000ff"/><rect x="1443" y="376" width="3" height="12" fill="#0000ff"/><rect x="1448" y="361" width="1" height="41" fill="#0000ff"/><rect x="1447" y="364" width="3" height="12" fill="#0000ff"/><rect x="1452" y="329" width="1" height="46" fill="#0000ff"/><rect x="1451" y="333" width="3" height="34" fill="#0000ff"/><rect x="1456" y="326" width="1" height="30" fill="#ffffff"/><rect x="1455" y="328" width="3" height="5" fill="#ffffff"/><rect x="1460" y="271" width="1" height="81" fill="#0000ff"/><rect x="1459" y="286" width="3" height="45" fill="#0000ff"/><rect x="1464" y="260" width="1" height="56" fill="#ffffff"/><rect x="1463" y="280" width="3" height="23" fill="#ffffff"/><rect x="1468" y="289" width="1" height="27" fill="#ffffff"/><rect x="1467" y="300" width="3" height="2" fill="#ffffff"/><rect x="1472" y="244" width="1" height="87" fill="#ffffff"/><rect x="1471" y="296" width="3" height="21" fill="#ffffff"/><rect x="1476" y="248" width="1" height="88" fill="#0000ff"/><rect x="1475" y="310" width="3" height="2" fill="#0000ff"/><rect x="1480" y="213" width="1" height="128" fill="#0000ff"/><rect x="1479" y="232" width="3" height="81" fill="#0000ff"/><rect x="1484" y="228" width="1" height="6" fill="#ffffff"/><rect x="1483" y="229" width="3" height="2" fill="#ffffff"/><rect x="1488" y="218" width="1" height="19" fill="#0000ff"/><rect x="1487" y="218" width="3" height="13" fill="#0000ff"/><rect x="1492" y="198" width="1" height="93" fill="#0000ff"/><rect x="1491" y="217" width="3" height="6" fill="#0000ff"/><rect x="1496" y="148" width="1" height="68" fill="#0000ff"/><rect x="1495" y="207" width="3" height="8" fill="#0000ff"/><rect x="1500" y="173" width="1" height="50" fill="#0000ff"/><rect x="1499" y="186" width="3" height="33" fill="#0000ff"/><rect x="1504" y="155" width="1" height="34" fill="#0000ff"/><rect x="1503" y="170" width="3" height="11" fill="#0000ff"/><rect x="1508" y="148" width="1" height="86" fill="#0000ff"/><rect x="1507" y="159" width="3" height="14" fill="#0000ff"/><path d="M1184.0,363.0 L1188.0,360.5 L1192.0,358.3 L1196.0,355.3 L1200.0,352.0 L1204.0,348.5 L1208.0,345.0 L1212.0,341.6 L1216.0,338.2 L1220.0,334.8 L1224.0,331.3 L1228.0,327.5 L1232.0,323.7 L1236.0,319.9 L1240.0,317.3 L1244.0,315.5 L1248.0,313.5 L1252.0,311.5 L1256.0,309.6 L1260.0,308.2 L1264.0,307.0 L1268.0,307.1 L1272.0,306.9 L1276.0,306.7" stroke="#f2f9ff" stroke-width="2" fill="none"/><path d="M1184.0,358.0 L1188.0,355.4 L1192.0,353.0 L1196.0,349.8 L1200.0,346.1 L1204.0,342.3 L1208.0,338.6 L1212.0,334.9 L1216.0,331.3 L1220.0,327.6 L1224.0,323.9 L1228.0,319.9 L1232.0,315.7 L1236.0,311.7 L1240.0,309.1 L1244.0,307.5 L1248.0,305.7 L1252.0,303.7 L1256.0,302.1 L1260.0,300.9 L1264.0,299.9 L1268.0,300.6 L1272.0,300.7 L1276.0,300.9" stroke="#cde8fd" stroke-width="2" fill="none"/><path d="M1184.0,353.0 L1188.0,350.4 L1192.0,348.0 L1196.0,344.7 L1200.0,340.8 L1204.0,336.8 L1208.0,332.9 L1212.0,329.2 L1216.0,325.4 L1220.0,321.6 L1224.0,317.8 L1228.0,313.6 L1232.0,309.3 L1236.0,305.2 L1240.0,302.6 L1244.0,301.3 L1248.0,299.7 L1252.0,297.9 L1256.0,296.5 L1260.0,295.5 L1264.0,294.8 L1268.0,296.0 L1272.0,296.5 L1276.0,297.1" stroke="#acd9fc" stroke-width="2" fill="none"/><path d="M1184.0,348.0 L1188.0,345.5 L1192.0,343.2 L1196.0,339.8 L1200.0,335.9 L1204.0,331.8 L1208.0,327.9 L1212.0,324.1 L1216.0,320.2 L1220.0,316.4 L1224.0,312.6 L1228.0,308.2 L1232.0,303.8 L1236.0,299.6 L1240.0,297.3 L1244.0,296.2 L1248.0,294.9 L1252.0,293.3 L1256.0,292.1 L1260.0,291.4 L1264.0,290.9 L1268.0,292.7 L1272.0,293.6 L1276.0,294.4" stroke="#8ccbfb" stroke-width="2" fill="none"/><path d="M1184.0,343.0 L1188.0,340.6 L1192.0,338.5 L1196.0,335.1 L1200.0,331.1 L1204.0,326.8 L1208.0,322.8 L1212.0,318.9 L1216.0,315.0 L1220.0,311.2 L1224.0,307.2 L1228.0,302.8 L1232.0,298.3 L1236.0,294.0 L1240.0,291.8 L1244.0,291.2 L1248.0,290.2 L1252.0,288.8 L1256.0,287.9 L1260.0,287.5 L1264.0,287.4 L1268.0,289.8 L1272.0,291.1 L1276.0,292.4" stroke="#6cbaf9" stroke-width="2" fill="none"/><path d="M1184.0,337.0 L1188.0,334.9 L1192.0,333.1 L1196.0,329.7 L1200.0,325.6 L1204.0,321.3 L1208.0,317.2 L1212.0,313.2 L1216.0,309.4 L1220.0,305.5 L1224.0,301.5 L1228.0,296.9 L1232.0,292.3 L1236.0,288.0 L1240.0,286.2 L1244.0,286.1 L1248.0,285.6 L1252.0,284.5 L1256.0,283.9 L1260.0,284.0 L1264.0,284.3 L1268.0,287.5 L1272.0,289.4 L1276.0,291.1" stroke="#4ba7f6" stroke-width="2" fill="none"/><path d="M1184.0,330.0 L1188.0,328.3 L1192.0,327.1 L1196.0,323.6 L1200.0,319.1 L1204.0,314.4 L1208.0,310.1 L1212.0,306.0 L1216.0,302.1 L1220.0,298.1 L1224.0,294.0 L1228.0,289.2 L1232.0,284.3 L1236.0,279.9 L1240.0,278.8 L1244.0,280.0 L1248.0,280.3 L1252.0,279.8 L1256.0,279.7 L1260.0,280.5 L1264.0,281.6 L1268.0,286.3 L1272.0,289.0 L1276.0,291.4" stroke="#2f92ec" stroke-width="2" fill="none"/><path d="M1184.0,317.0 L1188.0,319.0 L1192.0,319.6 L1196.0,315.1 L1200.0,309.0 L1204.0,302.9 L1208.0,298.1 L1212.0,294.0 L1216.0,290.1 L1220.0,286.1 L1224.0,282.0 L1228.0,276.3 L1232.0,270.9 L1236.0,266.4 L1240.0,268.8 L1244.0,274.5 L1248.0,277.0 L1252.0,277.0 L1256.0,277.9 L1260.0,280.1 L1264.0,282.3 L1268.0,291.5 L1272.0,295.2 L1276.0,297.9" stroke="#1f80dc" stroke-width="2" fill="none"/><path d="M1280.0,308.1 L1284.0,314.0 L1288.0,321.2 L1292.0,330.4 L1296.0,341.5 L1300.0,353.8 L1304.0,362.7 L1308.0,371.8 L1312.0,380.1 L1316.0,387.3 L1320.0,398.4 L1324.0,409.6 L1328.0,419.6 L1332.0,428.5 L1336.0,434.2 L1340.0,438.7 L1344.0,441.9 L1348.0,444.9 L1352.0,447.3 L1356.0,450.3 L1360.0,453.6 L1364.0,456.5 L1368.0,458.8 L1372.0,460.8 L1376.0,462.6 L1380.0,463.7 L1384.0,464.4 L1388.0,465.7 L1392.0,469.5 L1396.0,473.9 L1400.0,475.8 L1404.0,477.3 L1408.0,478.4 L1412.0,478.9 L1416.0,479.1 L1420.0,479.1 L1424.0,478.9 L1428.0,478.4" stroke="#808080" stroke-width="2" fill="none"/><path d="M1280.0,303.0 L1284.0,310.5 L1288.0,319.5 L1292.0,330.7 L1296.0,344.1 L1300.0,358.7 L1304.0,369.1 L1308.0,379.6 L1312.0,389.2 L1316.0,397.2 L1320.0,409.8 L1324.0,422.6 L1328.0,433.7 L1332.0,443.6 L1336.0,449.4 L1340.0,453.7 L1344.0,456.7 L1348.0,459.2 L1352.0,461.1 L1356.0,463.8 L1360.0,466.9 L1364.0,469.4 L1368.0,471.3 L1372.0,472.9 L1376.0,474.2 L1380.0,474.7 L1384.0,474.9 L1388.0,475.7 L1392.0,479.6 L1396.0,484.2 L1400.0,485.7 L1404.0,486.9 L1408.0,487.5 L1412.0,487.5 L1416.0,487.1 L1420.0,486.6 L1424.0,485.8 L1428.0,484.8" stroke="#808080" stroke-width="2" fill="none"/><path d="M1280.0,299.8 L1284.0,308.7 L1288.0,319.3 L1292.0,332.3 L1296.0,347.7 L1300.0,364.5 L1304.0,376.0 L1308.0,387.7 L1312.0,398.1 L1316.0,406.7 L1320.0,420.6 L1324.0,434.5 L1328.0,446.5 L1332.0,456.9 L1336.0,462.5 L1340.0,466.6 L1344.0,468.9 L1348.0,470.9 L1352.0,472.1 L1356.0,474.5 L1360.0,477.1 L1364.0,479.2 L1368.0,480.7 L1372.0,481.8 L1376.0,482.6 L1380.0,482.5 L1384.0,482.0 L1388.0,482.4 L1392.0,486.4 L1396.0,491.3 L1400.0,492.4 L1404.0,493.3 L1408.0,493.5 L1412.0,493.0 L1416.0,492.1 L1420.0,491.1 L1424.0,489.8 L1428.0,488.3" stroke="#808080" stroke-width="2" fill="none"/><path d="M1280.0,297.8 L1284.0,308.1 L1288.0,320.2 L1292.0,334.9 L1296.0,352.2 L1300.0,370.8 L1304.0,383.3 L1308.0,395.9 L1312.0,407.0 L1316.0,416.0 L1320.0,431.0 L1324.0,445.8 L1328.0,458.4 L1332.0,469.2 L1336.0,474.4 L1340.0,477.9 L1344.0,479.6 L1348.0,480.8 L1352.0,481.3 L1356.0,483.1 L1360.0,485.4 L1364.0,487.0 L1368.0,488.0 L1372.0,488.5 L1376.0,488.8 L1380.0,488.2 L1384.0,487.1 L1388.0,487.1 L1392.0,491.2 L1396.0,496.3 L1400.0,497.2 L1404.0,497.7 L1408.0,497.5 L1412.0,496.6 L1416.0,495.3 L1420.0,493.8 L1424.0,492.2 L1428.0,490.3" stroke="#808080" stroke-width="2" fill="none"/><path d="M1280.0,296.5 L1284.0,308.6 L1288.0,322.5 L1292.0,339.3 L1296.0,358.8 L1300.0,379.7 L1304.0,393.3 L1308.0,406.8 L1312.0,418.5 L1316.0,427.7 L1320.0,443.8 L1324.0,459.7 L1328.0,472.8 L1332.0,483.7 L1336.0,488.3 L1340.0,490.9 L1344.0,491.4 L1348.0,491.6 L1352.0,491.1 L1356.0,492.1 L1360.0,493.8 L1364.0,494.8 L1368.0,495.1 L1372.0,495.0 L1376.0,494.7 L1380.0,493.3 L1384.0,491.5 L1388.0,491.0 L1392.0,495.4 L1396.0,500.8 L1400.0,501.4 L1404.0,501.5 L1408.0,500.9 L1412.0,499.5 L1416.0,497.6 L1420.0,495.7 L1424.0,493.6 L1428.0,491.2" stroke="#808080" stroke-width="2" fill="none"/><path d="M1280.0,296.2 L1284.0,310.6 L1288.0,326.8 L1292.0,346.3 L1296.0,368.6 L1300.0,392.1 L1304.0,406.7 L1308.0,421.1 L1312.0,433.2 L1316.0,442.2 L1320.0,459.6 L1324.0,476.5 L1328.0,489.9 L1332.0,500.8 L1336.0,504.0 L1340.0,505.1 L1344.0,504.0 L1348.0,502.7 L1352.0,500.7 L1356.0,500.7 L1360.0,501.6 L1364.0,501.9 L1368.0,501.3 L1372.0,500.4 L1376.0,499.3 L1380.0,497.1 L1384.0,494.6 L1388.0,493.6 L1392.0,498.4 L1396.0,504.5 L1400.0,504.7 L1404.0,504.5 L1408.0,503.4 L1412.0,501.4 L1416.0,498.9 L1420.0,496.5 L1424.0,493.9 L1428.0,491.1" stroke="#808080" stroke-width="2" fill="none"/><path d="M1280.0,298.0 L1284.0,316.9 L1288.0,337.6 L1292.0,361.7 L1296.0,388.8 L1300.0,416.9 L1304.0,432.2 L1308.0,447.1 L1312.0,458.9 L1316.0,466.7 L1320.0,485.7 L1324.0,503.9 L1328.0,517.3 L1332.0,527.1 L1336.0,527.1 L1340.0,524.7 L1344.0,520.0 L1348.0,515.6 L1352.0,510.7 L1356.0,509.1 L1360.0,508.9 L1364.0,508.0 L1368.0,506.2 L1372.0,504.2 L1376.0,502.2 L1380.0,498.8 L1384.0,495.1 L1388.0,493.7 L1392.0,500.1 L1396.0,507.9 L1400.0,507.6 L1404.0,506.8 L1408.0,505.0 L1412.0,502.1 L1416.0,498.7 L1420.0,495.5 L1424.0,492.2 L1428.0,488.7" stroke="#808080" stroke-width="2" fill="none"/><path d="M1280.0,309.0 L1284.0,343.1 L1288.0,375.7 L1292.0,411.2 L1296.0,449.0 L1300.0,485.0 L1304.0,493.0 L1308.0,502.5 L1312.0,507.7 L1316.0,507.0 L1320.0,531.6 L1324.0,552.6 L1328.0,563.1 L1332.0,567.6 L1336.0,554.1 L1340.0,540.3 L1344.0,525.7 L1348.0,514.9 L1352.0,505.4 L1356.0,504.0 L1360.0,505.3 L1364.0,504.7 L1368.0,502.1 L1372.0,499.6 L1376.0,497.0 L1380.0,491.9 L1384.0,486.8 L1388.0,486.8 L1392.0,501.9 L1396.0,517.0 L1400.0,513.4 L1404.0,509.8 L1408.0,505.1 L1412.0,499.3 L1416.0,493.5 L1420.0,488.7 L1424.0,484.4 L1428.0,480.0" stroke="#808080" stroke-width="2" fill="none"/><path d="M1432.0,471.5 L1436.0,467.2 L1440.0,462.2 L1444.0,456.9 L1448.0,451.0 L1452.0,444.4 L1456.0,437.2 L1460.0,429.6 L1464.0,422.0 L1468.0,415.6 L1472.0,410.2 L1476.0,403.5 L1480.0,394.6 L1484.0,385.0 L1488.0,375.1 L1492.0,365.0 L1496.0,354.4 L1500.0,344.5 L1504.0,334.5 L1508.0,324.5" stroke="#f2f9ff" stroke-width="2" fill="none"/><path d="M1432.0,476.0 L1436.0,470.5 L1440.0,464.3 L1444.0,457.7 L1448.0,450.5 L1452.0,442.6 L1456.0,434.0 L1460.0,425.0 L1464.0,416.2 L1468.0,408.9 L1472.0,402.8 L1476.0,395.3 L1480.0,385.1 L1484.0,374.1 L1488.0,363.0 L1492.0,351.6 L1496.0,339.8 L1500.0,328.8 L1504.0,317.8 L1508.0,306.8" stroke="#cde8fd" stroke-width="2" fill="none"/><path d="M1432.0,477.8 L1436.0,471.3 L1440.0,464.0 L1444.0,456.4 L1448.0,448.2 L1452.0,439.2 L1456.0,429.5 L1460.0,419.4 L1464.0,409.6 L1468.0,401.7 L1472.0,395.2 L1476.0,387.1 L1480.0,375.9 L1484.0,363.9 L1488.0,351.9 L1492.0,339.5 L1496.0,326.8 L1500.0,315.1 L1504.0,303.5 L1508.0,291.9" stroke="#acd9fc" stroke-width="2" fill="none"/><path d="M1432.0,478.1 L1436.0,470.6 L1440.0,462.5 L1444.0,453.9 L1448.0,444.8 L1452.0,434.9 L1456.0,424.3 L1460.0,413.3 L1464.0,402.8 L1468.0,394.4 L1472.0,387.6 L1476.0,379.1 L1480.0,367.1 L1484.0,354.3 L1488.0,341.5 L1492.0,328.4 L1496.0,314.9 L1500.0,302.7 L1504.0,290.6 L1508.0,278.6" stroke="#8ccbfb" stroke-width="2" fill="none"/><path d="M1432.0,477.1 L1436.0,468.5 L1440.0,459.3 L1444.0,449.7 L1448.0,439.6 L1452.0,428.8 L1456.0,417.0 L1460.0,405.1 L1464.0,393.8 L1468.0,385.0 L1472.0,378.2 L1476.0,369.3 L1480.0,356.5 L1484.0,342.7 L1488.0,329.1 L1492.0,315.2 L1496.0,301.0 L1500.0,288.4 L1504.0,275.9 L1508.0,263.5" stroke="#6cbaf9" stroke-width="2" fill="none"/><path d="M1432.0,474.3 L1436.0,464.4 L1440.0,454.0 L1444.0,443.3 L1448.0,432.1 L1452.0,420.1 L1456.0,407.3 L1460.0,394.4 L1464.0,382.2 L1468.0,373.3 L1472.0,366.6 L1476.0,357.6 L1480.0,343.8 L1484.0,329.0 L1488.0,314.5 L1492.0,299.9 L1496.0,284.9 L1500.0,271.9 L1504.0,259.2 L1508.0,246.6" stroke="#4ba7f6" stroke-width="2" fill="none"/><path d="M1432.0,466.7 L1436.0,454.9 L1440.0,442.5 L1444.0,430.1 L1448.0,417.4 L1452.0,403.9 L1456.0,389.5 L1460.0,375.2 L1464.0,362.2 L1468.0,353.7 L1472.0,348.1 L1476.0,339.1 L1480.0,323.7 L1484.0,307.4 L1488.0,291.7 L1492.0,276.0 L1496.0,260.0 L1500.0,246.9 L1504.0,234.0 L1508.0,221.4" stroke="#2f92ec" stroke-width="2" fill="none"/><path d="M1432.0,439.0 L1436.0,424.5 L1440.0,410.0 L1444.0,396.0 L1448.0,382.0 L1452.0,366.8 L1456.0,350.3 L1460.0,334.9 L1464.0,322.3 L1468.0,318.5 L1472.0,319.0 L1476.0,310.7 L1480.0,289.5 L1484.0,268.3 L1488.0,249.9 L1492.0,232.5 L1496.0,215.0 L1500.0,203.7 L1504.0,192.3 L1508.0,181.0" stroke="#1f80dc" stroke-width="2" fill="none"/><path d="M0.0,690.0 C4.2,685.9 16.7,673.3 25.0,665.5 C33.3,657.7 40.8,650.1 50.0,643.0 C59.2,635.9 66.7,631.3 80.0,623.0 C93.3,614.7 115.8,602.2 130.0,593.0 C144.2,583.8 155.0,576.0 165.0,568.0 C175.0,560.0 182.5,549.9 190.0,545.0 C197.5,540.1 198.3,540.1 210.0,538.5 C221.7,536.9 245.0,537.7 260.0,535.5 C275.0,533.3 290.0,528.2 300.0,525.5 C310.0,522.8 312.5,521.9 320.0,519.0 C327.5,516.1 338.3,511.3 345.0,508.0 C351.7,504.7 355.0,502.8 360.0,499.0 C365.0,495.2 370.0,489.8 375.0,485.5 C380.0,481.2 385.0,476.6 390.0,473.5 C395.0,470.4 400.0,468.4 405.0,466.7 C410.0,464.9 415.0,464.6 420.0,463.0 C425.0,461.4 430.0,459.5 435.0,457.0 C440.0,454.5 445.0,450.7 450.0,448.0 C455.0,445.3 461.7,442.7 465.0,441.0 C468.3,439.3 469.2,438.5 470.0,438.0" stroke="#800080" stroke-width="2" fill="none"/><path d="M1180.0,469.0 C1186.7,465.8 1206.7,455.5 1220.0,450.0 C1233.3,444.5 1248.8,439.3 1260.0,436.0 C1271.2,432.7 1277.0,430.0 1287.0,430.0 C1297.0,430.0 1309.5,433.8 1320.0,436.0 C1330.5,438.2 1340.0,441.2 1350.0,443.0 C1360.0,444.8 1370.0,445.5 1380.0,447.0 C1390.0,448.5 1400.0,451.4 1410.0,452.0 C1420.0,452.6 1431.7,451.6 1440.0,450.4 C1448.3,449.1 1454.2,446.3 1460.0,444.5 C1465.8,442.7 1470.0,441.9 1475.0,439.8 C1480.0,437.7 1485.8,434.0 1490.0,431.6 C1494.2,429.2 1497.0,427.5 1500.0,425.7 C1503.0,423.9 1506.7,421.8 1508.0,421.0" stroke="#800080" stroke-width="2" fill="none"/><rect x="834" y="4" width="228" height="4" fill="#0000ff"/><path d="M1511,0 L1521,0 L1516,5 Z" fill="#8a96a3"/><path d="M3,6 L10,6 L6.5,10 Z" fill="#ffffff"/><rect x="592" y="891" width="1" height="13" fill="#fff"/><rect x="595" y="891" width="3" height="18" fill="#fff"/><rect x="596" y="891" width="1" height="26" fill="#fff"/><rect x="599" y="891" width="3" height="18" fill="#00f"/><rect x="600" y="891" width="1" height="22" fill="#00f"/><rect x="1432" y="41" width="117" height="2" fill="#00ff00"/><rect x="1432" y="130" width="117" height="2" fill="#00ff00"/><rect x="1432" y="219" width="117" height="2" fill="#00ff00"/><rect x="1432" y="308" width="117" height="2" fill="#00ff00"/><rect x="1432" y="397" width="117" height="2" fill="#ffff00"/><rect x="1432" y="486" width="117" height="2" fill="#ff0000"/><path d="M1428.5,503 L1428.5,491.5 L1423.5,491.5 L1432,483.5 L1440.5,491.5 L1435.5,491.5 L1435.5,503" stroke="#00ff00" stroke-width="1.4" fill="none"/></svg>
<div style="position:absolute;left:15px;top:2.70px;font-size:10px;line-height:10px;color:#fff;font-weight:400;letter-spacing:-0.4px;white-space:nowrap;">GBPJPY,H4</div><div style="position:absolute;left:1548.5px;top:37.03px;font-size:12px;line-height:12px;color:#00ff00;font-weight:700;letter-spacing:-0.15px;white-space:nowrap;">TP 4 : 215.032</div><div style="position:absolute;left:1548.5px;top:126.03px;font-size:12px;line-height:12px;color:#00ff00;font-weight:700;letter-spacing:-0.15px;white-space:nowrap;">TP 3 : 214.237</div><div style="position:absolute;left:1548.5px;top:215.03px;font-size:12px;line-height:12px;color:#00ff00;font-weight:700;letter-spacing:-0.15px;white-space:nowrap;">TP 2 : 213.443</div><div style="position:absolute;left:1548.5px;top:304.03px;font-size:12px;line-height:12px;color:#00ff00;font-weight:700;letter-spacing:-0.15px;white-space:nowrap;">TP 1 : 212.649</div><div style="position:absolute;left:1548.5px;top:393.03px;font-size:12px;line-height:12px;color:#ffff00;font-weight:700;letter-spacing:-0.15px;white-space:nowrap;">ENTRY 211.855</div><div style="position:absolute;left:1548.5px;top:482.03px;font-size:12px;line-height:12px;color:#ff0000;font-weight:700;letter-spacing:-0.15px;white-space:nowrap;">SL : 211.061</div><div style="position:absolute;left:1419px;top:494.62px;font-size:12.5px;line-height:12.5px;color:#00ff00;font-weight:700;letter-spacing:-0.3px;white-space:nowrap;">BUY</div><div style="position:absolute;left:1666px;top:41px;width:218px;height:20px;background:#00ffff;"></div><div style="position:absolute;left:1570.5px;width:400px;text-align:center;top:46.20px;font-size:13px;line-height:13px;color:#000;font-weight:700;letter-spacing:-0.6px;white-space:nowrap">SCREENER</div><div style="position:absolute;left:1666px;top:63px;width:108px;height:20px;background:#00ffff;"></div><div style="position:absolute;left:1776px;top:63px;width:108px;height:20px;background:#ffff00;"></div><div style="position:absolute;left:1518.5px;width:400px;text-align:center;top:67.20px;font-size:13px;line-height:13px;color:#000;font-weight:700;letter-spacing:-0.3px;white-space:nowrap">EURUSD</div><div style="position:absolute;left:1628.5px;width:400px;text-align:center;top:67.20px;font-size:13px;line-height:13px;color:#000;font-weight:700;letter-spacing:-0.25px;white-space:nowrap">Bullish</div><div style="position:absolute;left:1666px;top:85px;width:108px;height:20px;background:#00ffff;"></div><div style="position:absolute;left:1776px;top:85px;width:108px;height:20px;background:#ffff00;"></div><div style="position:absolute;left:1518.5px;width:400px;text-align:center;top:89.20px;font-size:13px;line-height:13px;color:#000;font-weight:700;letter-spacing:-0.3px;white-space:nowrap">GBPUSD</div><div style="position:absolute;left:1628.5px;width:400px;text-align:center;top:89.20px;font-size:13px;line-height:13px;color:#000;font-weight:700;letter-spacing:-0.25px;white-space:nowrap">Bullish</div><div style="position:absolute;left:1666px;top:107px;width:108px;height:20px;background:#00ffff;"></div><div style="position:absolute;left:1776px;top:107px;width:108px;height:20px;background:#ff6600;"></div><div style="position:absolute;left:1518.5px;width:400px;text-align:center;top:111.20px;font-size:13px;line-height:13px;color:#000;font-weight:700;letter-spacing:-0.3px;white-space:nowrap">USDJPY</div><div style="position:absolute;left:1628.5px;width:400px;text-align:center;top:111.20px;font-size:13px;line-height:13px;color:#000;font-weight:700;letter-spacing:-0.25px;white-space:nowrap">Bearish</div><div style="position:absolute;left:1666px;top:129px;width:108px;height:20px;background:#00ffff;"></div><div style="position:absolute;left:1776px;top:129px;width:108px;height:20px;background:#ff6600;"></div><div style="position:absolute;left:1518.5px;width:400px;text-align:center;top:133.20px;font-size:13px;line-height:13px;color:#000;font-weight:700;letter-spacing:-0.3px;white-space:nowrap">USDCHF</div><div style="position:absolute;left:1628.5px;width:400px;text-align:center;top:133.20px;font-size:13px;line-height:13px;color:#000;font-weight:700;letter-spacing:-0.25px;white-space:nowrap">Bearish</div><div style="position:absolute;left:1666px;top:151px;width:108px;height:20px;background:#00ffff;"></div><div style="position:absolute;left:1776px;top:151px;width:108px;height:20px;background:#ffff00;"></div><div style="position:absolute;left:1518.5px;width:400px;text-align:center;top:155.20px;font-size:13px;line-height:13px;color:#000;font-weight:700;letter-spacing:-0.3px;white-space:nowrap">AUDUSD</div><div style="position:absolute;left:1628.5px;width:400px;text-align:center;top:155.20px;font-size:13px;line-height:13px;color:#000;font-weight:700;letter-spacing:-0.25px;white-space:nowrap">Bullish</div><div style="position:absolute;left:1666px;top:173px;width:108px;height:20px;background:#00ffff;"></div><div style="position:absolute;left:1776px;top:173px;width:108px;height:20px;background:#ffff00;"></div><div style="position:absolute;left:1518.5px;width:400px;text-align:center;top:177.20px;font-size:13px;line-height:13px;color:#000;font-weight:700;letter-spacing:-0.3px;white-space:nowrap">NZDUSD</div><div style="position:absolute;left:1628.5px;width:400px;text-align:center;top:177.20px;font-size:13px;line-height:13px;color:#000;font-weight:700;letter-spacing:-0.25px;white-space:nowrap">Bullish</div><div style="position:absolute;left:1666px;top:195px;width:108px;height:20px;background:#00ffff;"></div><div style="position:absolute;left:1776px;top:195px;width:108px;height:20px;background:#ff6600;"></div><div style="position:absolute;left:1518.5px;width:400px;text-align:center;top:199.20px;font-size:13px;line-height:13px;color:#000;font-weight:700;letter-spacing:-0.3px;white-space:nowrap">USDCAD</div><div style="position:absolute;left:1628.5px;width:400px;text-align:center;top:199.20px;font-size:13px;line-height:13px;color:#000;font-weight:700;letter-spacing:-0.25px;white-space:nowrap">Bearish</div><div style="position:absolute;left:1666px;top:217px;width:108px;height:20px;background:#00ffff;"></div><div style="position:absolute;left:1776px;top:217px;width:108px;height:20px;background:#ffff00;"></div><div style="position:absolute;left:1518.5px;width:400px;text-align:center;top:221.20px;font-size:13px;line-height:13px;color:#000;font-weight:700;letter-spacing:-0.3px;white-space:nowrap">EURJPY</div><div style="position:absolute;left:1628.5px;width:400px;text-align:center;top:221.20px;font-size:13px;line-height:13px;color:#000;font-weight:700;letter-spacing:-0.25px;white-space:nowrap">Bullish</div><div style="position:absolute;left:1666px;top:239px;width:108px;height:20px;background:#00ffff;"></div><div style="position:absolute;left:1776px;top:239px;width:108px;height:20px;background:#ffff00;"></div><div style="position:absolute;left:1518.5px;width:400px;text-align:center;top:243.20px;font-size:13px;line-height:13px;color:#000;font-weight:700;letter-spacing:-0.3px;white-space:nowrap">GBPJPY</div><div style="position:absolute;left:1628.5px;width:400px;text-align:center;top:243.20px;font-size:13px;line-height:13px;color:#000;font-weight:700;letter-spacing:-0.25px;white-space:nowrap">Bullish</div><div style="position:absolute;left:1666px;top:731px;width:218px;height:20px;background:#00ffff;"></div><div style="position:absolute;left:1571px;width:400px;text-align:center;top:736.20px;font-size:13px;line-height:13px;color:#000;font-weight:700;letter-spacing:-0.1px;white-space:nowrap">TREND ANALYSIS</div><div style="position:absolute;left:1666px;top:753px;width:108px;height:20px;background:#00ffff;"></div><div style="position:absolute;left:1776px;top:753px;width:108px;height:20px;background:#00ff00;"></div><div style="position:absolute;left:1674.5px;top:758.20px;font-size:13px;line-height:13px;color:#000;font-weight:700;letter-spacing:-0.25px;white-space:nowrap;">Status</div><div style="position:absolute;left:1783.5px;top:758.20px;font-size:13px;line-height:13px;color:#000;font-weight:700;letter-spacing:-0.25px;white-space:nowrap;">Bullish</div><div style="position:absolute;left:1666px;top:775px;width:108px;height:20px;background:#00ffff;"></div><div style="position:absolute;left:1776px;top:775px;width:108px;height:20px;background:#00ff00;"></div><div style="position:absolute;left:1519px;width:400px;text-align:center;top:779.20px;font-size:13px;line-height:13px;color:#000;font-weight:700;letter-spacing:-0.25px;white-space:nowrap">1 Min</div><div style="position:absolute;left:1628.5px;width:400px;text-align:center;top:779.20px;font-size:13px;line-height:13px;color:#000;font-weight:700;letter-spacing:-0.25px;white-space:nowrap">Bullish</div><div style="position:absolute;left:1666px;top:797px;width:108px;height:20px;background:#00ffff;"></div><div style="position:absolute;left:1776px;top:797px;width:108px;height:20px;background:#00ff00;"></div><div style="position:absolute;left:1519px;width:400px;text-align:center;top:801.20px;font-size:13px;line-height:13px;color:#000;font-weight:700;letter-spacing:-0.25px;white-space:nowrap">5 Min</div><div style="position:absolute;left:1628.5px;width:400px;text-align:center;top:801.20px;font-size:13px;line-height:13px;color:#000;font-weight:700;letter-spacing:-0.25px;white-space:nowrap">Bullish</div><div style="position:absolute;left:1666px;top:819px;width:108px;height:20px;background:#00ffff;"></div><div style="position:absolute;left:1776px;top:819px;width:108px;height:20px;background:#00ff00;"></div><div style="position:absolute;left:1519px;width:400px;text-align:center;top:823.20px;font-size:13px;line-height:13px;color:#000;font-weight:700;letter-spacing:-0.25px;white-space:nowrap">15 Min</div><div style="position:absolute;left:1628.5px;width:400px;text-align:center;top:823.20px;font-size:13px;line-height:13px;color:#000;font-weight:700;letter-spacing:-0.25px;white-space:nowrap">Bullish</div><div style="position:absolute;left:1666px;top:841px;width:108px;height:20px;background:#00ffff;"></div><div style="position:absolute;left:1776px;top:841px;width:108px;height:20px;background:#00ff00;"></div><div style="position:absolute;left:1519px;width:400px;text-align:center;top:845.20px;font-size:13px;line-height:13px;color:#000;font-weight:700;letter-spacing:-0.25px;white-space:nowrap">30 Min</div><div style="position:absolute;left:1628.5px;width:400px;text-align:center;top:845.20px;font-size:13px;line-height:13px;color:#000;font-weight:700;letter-spacing:-0.25px;white-space:nowrap">Bullish</div><div style="position:absolute;left:1666px;top:863px;width:108px;height:20px;background:#00ffff;"></div><div style="position:absolute;left:1776px;top:863px;width:108px;height:20px;background:#00ff00;"></div><div style="position:absolute;left:1519px;width:400px;text-align:center;top:867.20px;font-size:13px;line-height:13px;color:#000;font-weight:700;letter-spacing:-0.25px;white-space:nowrap">1 Hour</div><div style="position:absolute;left:1628.5px;width:400px;text-align:center;top:867.20px;font-size:13px;line-height:13px;color:#000;font-weight:700;letter-spacing:-0.25px;white-space:nowrap">Bullish</div><div style="position:absolute;left:1666px;top:885px;width:108px;height:20px;background:#00ffff;"></div><div style="position:absolute;left:1776px;top:885px;width:108px;height:20px;background:#00ff00;"></div><div style="position:absolute;left:1519px;width:400px;text-align:center;top:889.20px;font-size:13px;line-height:13px;color:#000;font-weight:700;letter-spacing:-0.25px;white-space:nowrap">4 Hour</div><div style="position:absolute;left:1628.5px;width:400px;text-align:center;top:889.20px;font-size:13px;line-height:13px;color:#000;font-weight:700;letter-spacing:-0.25px;white-space:nowrap">Bullish</div><div style="position:absolute;left:1666px;top:907px;width:108px;height:20px;background:#00ffff;"></div><div style="position:absolute;left:1776px;top:907px;width:108px;height:20px;background:#00ff00;"></div><div style="position:absolute;left:1519px;width:400px;text-align:center;top:911.20px;font-size:13px;line-height:13px;color:#000;font-weight:700;letter-spacing:-0.25px;white-space:nowrap">Daily</div><div style="position:absolute;left:1628.5px;width:400px;text-align:center;top:911.20px;font-size:13px;line-height:13px;color:#000;font-weight:700;letter-spacing:-0.25px;white-space:nowrap">Bullish</div>
<div style="position:absolute;left:468px;top:8px;width:714px;height:883px;background:#1c1c1c;"></div><div style="position:absolute;left:469px;top:9px;width:712px;height:881px;background:#5496cf;"></div><div style="position:absolute;left:624.5px;width:400px;text-align:center;top:15.54px;font-size:15px;line-height:15px;color:#000;font-weight:400;letter-spacing:-0.2px;white-space:nowrap">Custom Indicator - Quadra_Zone_Entries_Indicator</div><div style="position:absolute;left:1101px;top:9px;width:28px;height:21px;background:#5496cf;box-sizing:border-box;border:1px solid #3b3b3b;border-top:none;border-right:none"></div><div style="position:absolute;left:1129px;top:9px;width:47px;height:21px;background:#c75a50;box-sizing:border-box;border:1px solid #5a2a26;border-top:none;border-left:none"></div><div style="position:absolute;left:916px;width:400px;text-align:center;top:12.37px;font-size:14px;line-height:14px;color:#000;font-weight:700;letter-spacing:0px;white-space:nowrap">?</div><svg width="20" height="20" style="position:absolute;left:1143px;top:10px"><path d="M6.2,6 L12.8,12.3 M12.8,6 L6.2,12.3" stroke="#000" stroke-width="2.4" stroke-linecap="square"/></svg><div style="position:absolute;left:476px;top:39px;width:698px;height:844px;background:#f0f0f0;"></div><div style="position:absolute;left:484px;top:48px;width:42px;height:19px;background:#ebebeb;box-sizing:border-box;border:1px solid #898c95;border-bottom:none"></div><div style="position:absolute;left:305.0px;width:400px;text-align:center;top:52.36px;font-size:11px;line-height:11px;color:#000;font-weight:400;letter-spacing:-0.3px;white-space:nowrap">About</div><div style="position:absolute;left:526px;top:48px;width:51px;height:19px;background:#ebebeb;box-sizing:border-box;border:1px solid #898c95;border-bottom:none"></div><div style="position:absolute;left:351.5px;width:400px;text-align:center;top:52.36px;font-size:11px;line-height:11px;color:#000;font-weight:400;letter-spacing:-0.3px;white-space:nowrap">Common</div><div style="position:absolute;left:623px;top:48px;width:40px;height:19px;background:#ebebeb;box-sizing:border-box;border:1px solid #898c95;border-bottom:none"></div><div style="position:absolute;left:443.0px;width:400px;text-align:center;top:52.36px;font-size:11px;line-height:11px;color:#000;font-weight:400;letter-spacing:-0.3px;white-space:nowrap">Colors</div><div style="position:absolute;left:663px;top:48px;width:70px;height:19px;background:#ebebeb;box-sizing:border-box;border:1px solid #898c95;border-bottom:none"></div><div style="position:absolute;left:498.0px;width:400px;text-align:center;top:52.36px;font-size:11px;line-height:11px;color:#000;font-weight:400;letter-spacing:-0.3px;white-space:nowrap">Visualization</div><div style="position:absolute;left:482px;top:66px;width:688px;height:783px;background:#fff;box-sizing:border-box;border:1px solid #898c95"></div><div style="position:absolute;left:577px;top:46px;width:46px;height:21px;background:#fff;box-sizing:border-box;border:1px solid #898c95;border-bottom:none"></div><div style="position:absolute;left:400px;width:400px;text-align:center;top:50.86px;font-size:11px;line-height:11px;color:#000;font-weight:400;letter-spacing:-0.3px;white-space:nowrap">Inputs</div><div style="position:absolute;left:494px;top:76px;width:552px;height:762px;background:#fff;box-sizing:border-box;border:1px solid #828790"></div><div style="position:absolute;left:496px;top:78px;width:548px;height:17px;background:#fafafa;box-sizing:border-box;border:1px solid #e2e2e2"></div><div style="position:absolute;left:769px;top:78px;width:1px;height:17px;background:#e2e2e2;"></div><div style="position:absolute;left:502px;top:81.16px;font-size:11px;line-height:11px;color:#000;font-weight:400;letter-spacing:-0.15px;white-space:nowrap;">Variable</div><div style="position:absolute;left:776px;top:81.16px;font-size:11px;line-height:11px;color:#000;font-weight:400;letter-spacing:-0.15px;white-space:nowrap;">Value</div><div style="position:absolute;left:496px;top:95px;width:548px;height:19px;background:#ffffff;"></div><div style="position:absolute;left:496px;top:114px;width:548px;height:1px;background:#c9c9c9;"></div><div style="position:absolute;left:769px;top:95px;width:1px;height:19px;background:#d0d0d0;"></div><svg width="16" height="17" style="position:absolute;left:497px;top:97px"><path d="M0.5,0.5 L12.3,0.5 L15.5,3.7 L15.5,14.7 L13.5,16 L12,13.2 L10.5,12.2 L9,13.5 L7.7,12.2 L6,13.5 L4.5,12.4 L3,14 L1.5,12.8 L0.5,14.7 Z" fill="url(#gB)" stroke="#4cb84c" stroke-width="1"/><path d="M12.3,0.5 L12.3,3.7 L15.5,3.7 Z" fill="#ffffff" fill-opacity=".55" stroke="#4cb84c" stroke-width="0.8"/><path d="M2.5,10 L7.5,5.5 M9.3,8.3 Q9.6,9.6 13,9.6" stroke="#0b7a0b" stroke-width="1.6" fill="none"/></svg><div style="position:absolute;left:517px;top:99.86px;font-size:11px;line-height:11px;color:#000;font-weight:400;letter-spacing:-0.2px;white-space:nowrap;">Show EMA Ribbon</div><div style="position:absolute;left:773px;top:99.86px;font-size:11px;line-height:11px;color:#000;font-weight:400;letter-spacing:-0.2px;white-space:nowrap;">true</div><div style="position:absolute;left:496px;top:115px;width:548px;height:19px;background:#ebebeb;"></div><div style="position:absolute;left:496px;top:134px;width:548px;height:1px;background:#c9c9c9;"></div><div style="position:absolute;left:769px;top:115px;width:1px;height:19px;background:#d0d0d0;"></div><svg width="16" height="17" style="position:absolute;left:497px;top:117px"><path d="M0.5,0.5 L12.3,0.5 L15.5,3.7 L15.5,14.7 L13.5,16 L12,13.2 L10.5,12.2 L9,13.5 L7.7,12.2 L6,13.5 L4.5,12.4 L3,14 L1.5,12.8 L0.5,14.7 Z" fill="url(#gI)" stroke="#6a9bd4" stroke-width="1"/><path d="M12.3,0.5 L12.3,3.7 L15.5,3.7 Z" fill="#ffffff" fill-opacity=".55" stroke="#6a9bd4" stroke-width="0.8"/><text x="2" y="10.8" font-family="Liberation Sans" font-size="7.2" font-weight="700" fill="#0a2a50" letter-spacing="-0.3">123</text></svg><div style="position:absolute;left:517px;top:119.86px;font-size:11px;line-height:11px;color:#000;font-weight:400;letter-spacing:-0.2px;white-space:nowrap;">EMA 1 Length</div><div style="position:absolute;left:773px;top:119.86px;font-size:11px;line-height:11px;color:#000;font-weight:400;letter-spacing:-0.2px;white-space:nowrap;">5</div><div style="position:absolute;left:496px;top:135px;width:548px;height:19px;background:#ffffff;"></div><div style="position:absolute;left:496px;top:154px;width:548px;height:1px;background:#c9c9c9;"></div><div style="position:absolute;left:769px;top:135px;width:1px;height:19px;background:#d0d0d0;"></div><svg width="16" height="17" style="position:absolute;left:497px;top:137px"><path d="M0.5,0.5 L12.3,0.5 L15.5,3.7 L15.5,14.7 L13.5,16 L12,13.2 L10.5,12.2 L9,13.5 L7.7,12.2 L6,13.5 L4.5,12.4 L3,14 L1.5,12.8 L0.5,14.7 Z" fill="url(#gI)" stroke="#6a9bd4" stroke-width="1"/><path d="M12.3,0.5 L12.3,3.7 L15.5,3.7 Z" fill="#ffffff" fill-opacity=".55" stroke="#6a9bd4" stroke-width="0.8"/><text x="2" y="10.8" font-family="Liberation Sans" font-size="7.2" font-weight="700" fill="#0a2a50" letter-spacing="-0.3">123</text></svg><div style="position:absolute;left:517px;top:139.86px;font-size:11px;line-height:11px;color:#000;font-weight:400;letter-spacing:-0.2px;white-space:nowrap;">EMA 2 Length</div><div style="position:absolute;left:773px;top:139.86px;font-size:11px;line-height:11px;color:#000;font-weight:400;letter-spacing:-0.2px;white-space:nowrap;">11</div><div style="position:absolute;left:496px;top:155px;width:548px;height:19px;background:#ebebeb;"></div><div style="position:absolute;left:496px;top:174px;width:548px;height:1px;background:#c9c9c9;"></div><div style="position:absolute;left:769px;top:155px;width:1px;height:19px;background:#d0d0d0;"></div><svg width="16" height="17" style="position:absolute;left:497px;top:157px"><path d="M0.5,0.5 L12.3,0.5 L15.5,3.7 L15.5,14.7 L13.5,16 L12,13.2 L10.5,12.2 L9,13.5 L7.7,12.2 L6,13.5 L4.5,12.4 L3,14 L1.5,12.8 L0.5,14.7 Z" fill="url(#gI)" stroke="#6a9bd4" stroke-width="1"/><path d="M12.3,0.5 L12.3,3.7 L15.5,3.7 Z" fill="#ffffff" fill-opacity=".55" stroke="#6a9bd4" stroke-width="0.8"/><text x="2" y="10.8" font-family="Liberation Sans" font-size="7.2" font-weight="700" fill="#0a2a50" letter-spacing="-0.3">123</text></svg><div style="position:absolute;left:517px;top:159.86px;font-size:11px;line-height:11px;color:#000;font-weight:400;letter-spacing:-0.2px;white-space:nowrap;">EMA 3 Length</div><div style="position:absolute;left:773px;top:159.86px;font-size:11px;line-height:11px;color:#000;font-weight:400;letter-spacing:-0.2px;white-space:nowrap;">15</div><div style="position:absolute;left:496px;top:175px;width:548px;height:19px;background:#ffffff;"></div><div style="position:absolute;left:496px;top:194px;width:548px;height:1px;background:#c9c9c9;"></div><div style="position:absolute;left:769px;top:175px;width:1px;height:19px;background:#d0d0d0;"></div><svg width="16" height="17" style="position:absolute;left:497px;top:177px"><path d="M0.5,0.5 L12.3,0.5 L15.5,3.7 L15.5,14.7 L13.5,16 L12,13.2 L10.5,12.2 L9,13.5 L7.7,12.2 L6,13.5 L4.5,12.4 L3,14 L1.5,12.8 L0.5,14.7 Z" fill="url(#gI)" stroke="#6a9bd4" stroke-width="1"/><path d="M12.3,0.5 L12.3,3.7 L15.5,3.7 Z" fill="#ffffff" fill-opacity=".55" stroke="#6a9bd4" stroke-width="0.8"/><text x="2" y="10.8" font-family="Liberation Sans" font-size="7.2" font-weight="700" fill="#0a2a50" letter-spacing="-0.3">123</text></svg><div style="position:absolute;left:517px;top:179.86px;font-size:11px;line-height:11px;color:#000;font-weight:400;letter-spacing:-0.2px;white-space:nowrap;">EMA 4 Length</div><div style="position:absolute;left:773px;top:179.86px;font-size:11px;line-height:11px;color:#000;font-weight:400;letter-spacing:-0.2px;white-space:nowrap;">18</div><div style="position:absolute;left:496px;top:195px;width:548px;height:19px;background:#ebebeb;"></div><div style="position:absolute;left:496px;top:214px;width:548px;height:1px;background:#c9c9c9;"></div><div style="position:absolute;left:769px;top:195px;width:1px;height:19px;background:#d0d0d0;"></div><svg width="16" height="17" style="position:absolute;left:497px;top:197px"><path d="M0.5,0.5 L12.3,0.5 L15.5,3.7 L15.5,14.7 L13.5,16 L12,13.2 L10.5,12.2 L9,13.5 L7.7,12.2 L6,13.5 L4.5,12.4 L3,14 L1.5,12.8 L0.5,14.7 Z" fill="url(#gI)" stroke="#6a9bd4" stroke-width="1"/><path d="M12.3,0.5 L12.3,3.7 L15.5,3.7 Z" fill="#ffffff" fill-opacity=".55" stroke="#6a9bd4" stroke-width="0.8"/><text x="2" y="10.8" font-family="Liberation Sans" font-size="7.2" font-weight="700" fill="#0a2a50" letter-spacing="-0.3">123</text></svg><div style="position:absolute;left:517px;top:199.86px;font-size:11px;line-height:11px;color:#000;font-weight:400;letter-spacing:-0.2px;white-space:nowrap;">EMA 5 Length</div><div style="position:absolute;left:773px;top:199.86px;font-size:11px;line-height:11px;color:#000;font-weight:400;letter-spacing:-0.2px;white-space:nowrap;">21</div><div style="position:absolute;left:496px;top:215px;width:548px;height:19px;background:#ffffff;"></div><div style="position:absolute;left:496px;top:234px;width:548px;height:1px;background:#c9c9c9;"></div><div style="position:absolute;left:769px;top:215px;width:1px;height:19px;background:#d0d0d0;"></div><svg width="16" height="17" style="position:absolute;left:497px;top:217px"><path d="M0.5,0.5 L12.3,0.5 L15.5,3.7 L15.5,14.7 L13.5,16 L12,13.2 L10.5,12.2 L9,13.5 L7.7,12.2 L6,13.5 L4.5,12.4 L3,14 L1.5,12.8 L0.5,14.7 Z" fill="url(#gI)" stroke="#6a9bd4" stroke-width="1"/><path d="M12.3,0.5 L12.3,3.7 L15.5,3.7 Z" fill="#ffffff" fill-opacity=".55" stroke="#6a9bd4" stroke-width="0.8"/><text x="2" y="10.8" font-family="Liberation Sans" font-size="7.2" font-weight="700" fill="#0a2a50" letter-spacing="-0.3">123</text></svg><div style="position:absolute;left:517px;top:219.86px;font-size:11px;line-height:11px;color:#000;font-weight:400;letter-spacing:-0.2px;white-space:nowrap;">EMA 6 Length</div><div style="position:absolute;left:773px;top:219.86px;font-size:11px;line-height:11px;color:#000;font-weight:400;letter-spacing:-0.2px;white-space:nowrap;">24</div><div style="position:absolute;left:496px;top:235px;width:548px;height:19px;background:#ebebeb;"></div><div style="position:absolute;left:496px;top:254px;width:548px;height:1px;background:#c9c9c9;"></div><div style="position:absolute;left:769px;top:235px;width:1px;height:19px;background:#d0d0d0;"></div><svg width="16" height="17" style="position:absolute;left:497px;top:237px"><path d="M0.5,0.5 L12.3,0.5 L15.5,3.7 L15.5,14.7 L13.5,16 L12,13.2 L10.5,12.2 L9,13.5 L7.7,12.2 L6,13.5 L4.5,12.4 L3,14 L1.5,12.8 L0.5,14.7 Z" fill="url(#gI)" stroke="#6a9bd4" stroke-width="1"/><path d="M12.3,0.5 L12.3,3.7 L15.5,3.7 Z" fill="#ffffff" fill-opacity=".55" stroke="#6a9bd4" stroke-width="0.8"/><text x="2" y="10.8" font-family="Liberation Sans" font-size="7.2" font-weight="700" fill="#0a2a50" letter-spacing="-0.3">123</text></svg><div style="position:absolute;left:517px;top:239.86px;font-size:11px;line-height:11px;color:#000;font-weight:400;letter-spacing:-0.2px;white-space:nowrap;">EMA 7 Length</div><div style="position:absolute;left:773px;top:239.86px;font-size:11px;line-height:11px;color:#000;font-weight:400;letter-spacing:-0.2px;white-space:nowrap;">28</div><div style="position:absolute;left:496px;top:255px;width:548px;height:19px;background:#ffffff;"></div><div style="position:absolute;left:496px;top:274px;width:548px;height:1px;background:#c9c9c9;"></div><div style="position:absolute;left:769px;top:255px;width:1px;height:19px;background:#d0d0d0;"></div><svg width="16" height="17" style="position:absolute;left:497px;top:257px"><path d="M0.5,0.5 L12.3,0.5 L15.5,3.7 L15.5,14.7 L13.5,16 L12,13.2 L10.5,12.2 L9,13.5 L7.7,12.2 L6,13.5 L4.5,12.4 L3,14 L1.5,12.8 L0.5,14.7 Z" fill="url(#gI)" stroke="#6a9bd4" stroke-width="1"/><path d="M12.3,0.5 L12.3,3.7 L15.5,3.7 Z" fill="#ffffff" fill-opacity=".55" stroke="#6a9bd4" stroke-width="0.8"/><text x="2" y="10.8" font-family="Liberation Sans" font-size="7.2" font-weight="700" fill="#0a2a50" letter-spacing="-0.3">123</text></svg><div style="position:absolute;left:517px;top:259.86px;font-size:11px;line-height:11px;color:#000;font-weight:400;letter-spacing:-0.2px;white-space:nowrap;">EMA 8 Length</div><div style="position:absolute;left:773px;top:259.86px;font-size:11px;line-height:11px;color:#000;font-weight:400;letter-spacing:-0.2px;white-space:nowrap;">34</div><div style="position:absolute;left:496px;top:275px;width:548px;height:19px;background:#ebebeb;"></div><div style="position:absolute;left:496px;top:294px;width:548px;height:1px;background:#c9c9c9;"></div><div style="position:absolute;left:769px;top:275px;width:1px;height:19px;background:#d0d0d0;"></div><svg width="16" height="17" style="position:absolute;left:497px;top:277px"><path d="M0.5,0.5 L12.3,0.5 L15.5,3.7 L15.5,14.7 L13.5,16 L12,13.2 L10.5,12.2 L9,13.5 L7.7,12.2 L6,13.5 L4.5,12.4 L3,14 L1.5,12.8 L0.5,14.7 Z" fill="url(#gI)" stroke="#6a9bd4" stroke-width="1"/><path d="M12.3,0.5 L12.3,3.7 L15.5,3.7 Z" fill="#ffffff" fill-opacity=".55" stroke="#6a9bd4" stroke-width="0.8"/><text x="2" y="10.8" font-family="Liberation Sans" font-size="7.2" font-weight="700" fill="#0a2a50" letter-spacing="-0.3">123</text></svg><div style="position:absolute;left:517px;top:279.86px;font-size:11px;line-height:11px;color:#000;font-weight:400;letter-spacing:-0.2px;white-space:nowrap;">Extra EMA Length (visual only)</div><div style="position:absolute;left:773px;top:279.86px;font-size:11px;line-height:11px;color:#000;font-weight:400;letter-spacing:-0.2px;white-space:nowrap;">200</div><div style="position:absolute;left:496px;top:295px;width:548px;height:19px;background:#ffffff;"></div><div style="position:absolute;left:496px;top:314px;width:548px;height:1px;background:#c9c9c9;"></div><div style="position:absolute;left:769px;top:295px;width:1px;height:19px;background:#d0d0d0;"></div><svg width="16" height="17" style="position:absolute;left:497px;top:297px"><path d="M0.5,0.5 L12.3,0.5 L15.5,3.7 L15.5,14.7 L13.5,16 L12,13.2 L10.5,12.2 L9,13.5 L7.7,12.2 L6,13.5 L4.5,12.4 L3,14 L1.5,12.8 L0.5,14.7 Z" fill="url(#gI)" stroke="#6a9bd4" stroke-width="1"/><path d="M12.3,0.5 L12.3,3.7 L15.5,3.7 Z" fill="#ffffff" fill-opacity=".55" stroke="#6a9bd4" stroke-width="0.8"/><text x="2" y="10.8" font-family="Liberation Sans" font-size="7.2" font-weight="700" fill="#0a2a50" letter-spacing="-0.3">123</text></svg><div style="position:absolute;left:517px;top:299.86px;font-size:11px;line-height:11px;color:#000;font-weight:400;letter-spacing:-0.2px;white-space:nowrap;">Number of Take Profits (1..4)</div><div style="position:absolute;left:773px;top:299.86px;font-size:11px;line-height:11px;color:#000;font-weight:400;letter-spacing:-0.2px;white-space:nowrap;">4</div><div style="position:absolute;left:496px;top:315px;width:548px;height:19px;background:#ebebeb;"></div><div style="position:absolute;left:496px;top:334px;width:548px;height:1px;background:#c9c9c9;"></div><div style="position:absolute;left:769px;top:315px;width:1px;height:19px;background:#d0d0d0;"></div><svg width="16" height="17" style="position:absolute;left:497px;top:317px"><path d="M0.5,0.5 L12.3,0.5 L15.5,3.7 L15.5,14.7 L13.5,16 L12,13.2 L10.5,12.2 L9,13.5 L7.7,12.2 L6,13.5 L4.5,12.4 L3,14 L1.5,12.8 L0.5,14.7 Z" fill="url(#gD)" stroke="#5fbccc" stroke-width="1"/><path d="M12.3,0.5 L12.3,3.7 L15.5,3.7 Z" fill="#ffffff" fill-opacity=".55" stroke="#5fbccc" stroke-width="0.8"/><text x="1.8" y="9.6" font-family="Liberation Sans" font-size="7.5" font-weight="700" fill="#1a5a66" letter-spacing="-0.6">1/2</text></svg><div style="position:absolute;left:517px;top:319.86px;font-size:11px;line-height:11px;color:#000;font-weight:400;letter-spacing:-0.2px;white-space:nowrap;">ATR Multiplier for SL</div><div style="position:absolute;left:773px;top:319.86px;font-size:11px;line-height:11px;color:#000;font-weight:400;letter-spacing:-0.2px;white-space:nowrap;">2.0</div><div style="position:absolute;left:496px;top:335px;width:548px;height:19px;background:#ffffff;"></div><div style="position:absolute;left:496px;top:354px;width:548px;height:1px;background:#c9c9c9;"></div><div style="position:absolute;left:769px;top:335px;width:1px;height:19px;background:#d0d0d0;"></div><svg width="16" height="17" style="position:absolute;left:497px;top:337px"><path d="M0.5,0.5 L12.3,0.5 L15.5,3.7 L15.5,14.7 L13.5,16 L12,13.2 L10.5,12.2 L9,13.5 L7.7,12.2 L6,13.5 L4.5,12.4 L3,14 L1.5,12.8 L0.5,14.7 Z" fill="url(#gD)" stroke="#5fbccc" stroke-width="1"/><path d="M12.3,0.5 L12.3,3.7 L15.5,3.7 Z" fill="#ffffff" fill-opacity=".55" stroke="#5fbccc" stroke-width="0.8"/><text x="1.8" y="9.6" font-family="Liberation Sans" font-size="7.5" font-weight="700" fill="#1a5a66" letter-spacing="-0.6">1/2</text></svg><div style="position:absolute;left:517px;top:339.86px;font-size:11px;line-height:11px;color:#000;font-weight:400;letter-spacing:-0.2px;white-space:nowrap;">TP Multiplier (relative to SL)</div><div style="position:absolute;left:773px;top:339.86px;font-size:11px;line-height:11px;color:#000;font-weight:400;letter-spacing:-0.2px;white-space:nowrap;">1.0</div><div style="position:absolute;left:496px;top:355px;width:548px;height:19px;background:#ebebeb;"></div><div style="position:absolute;left:496px;top:374px;width:548px;height:1px;background:#c9c9c9;"></div><div style="position:absolute;left:769px;top:355px;width:1px;height:19px;background:#d0d0d0;"></div><svg width="16" height="17" style="position:absolute;left:497px;top:357px"><path d="M0.5,0.5 L12.3,0.5 L15.5,3.7 L15.5,14.7 L13.5,16 L12,13.2 L10.5,12.2 L9,13.5 L7.7,12.2 L6,13.5 L4.5,12.4 L3,14 L1.5,12.8 L0.5,14.7 Z" fill="url(#gI)" stroke="#6a9bd4" stroke-width="1"/><path d="M12.3,0.5 L12.3,3.7 L15.5,3.7 Z" fill="#ffffff" fill-opacity=".55" stroke="#6a9bd4" stroke-width="0.8"/><text x="2" y="10.8" font-family="Liberation Sans" font-size="7.2" font-weight="700" fill="#0a2a50" letter-spacing="-0.3">123</text></svg><div style="position:absolute;left:517px;top:359.86px;font-size:11px;line-height:11px;color:#000;font-weight:400;letter-spacing:-0.2px;white-space:nowrap;">ATR Length</div><div style="position:absolute;left:773px;top:359.86px;font-size:11px;line-height:11px;color:#000;font-weight:400;letter-spacing:-0.2px;white-space:nowrap;">14</div><div style="position:absolute;left:496px;top:375px;width:548px;height:19px;background:#ffffff;"></div><div style="position:absolute;left:496px;top:394px;width:548px;height:1px;background:#c9c9c9;"></div><div style="position:absolute;left:769px;top:375px;width:1px;height:19px;background:#d0d0d0;"></div><svg width="16" height="17" style="position:absolute;left:497px;top:377px"><path d="M0.5,0.5 L12.3,0.5 L15.5,3.7 L15.5,14.7 L13.5,16 L12,13.2 L10.5,12.2 L9,13.5 L7.7,12.2 L6,13.5 L4.5,12.4 L3,14 L1.5,12.8 L0.5,14.7 Z" fill="url(#gB)" stroke="#4cb84c" stroke-width="1"/><path d="M12.3,0.5 L12.3,3.7 L15.5,3.7 Z" fill="#ffffff" fill-opacity=".55" stroke="#4cb84c" stroke-width="0.8"/><path d="M2.5,10 L7.5,5.5 M9.3,8.3 Q9.6,9.6 13,9.6" stroke="#0b7a0b" stroke-width="1.6" fill="none"/></svg><div style="position:absolute;left:517px;top:379.86px;font-size:11px;line-height:11px;color:#000;font-weight:400;letter-spacing:-0.2px;white-space:nowrap;">Show TP/SL Lines &amp; Boxes</div><div style="position:absolute;left:773px;top:379.86px;font-size:11px;line-height:11px;color:#000;font-weight:400;letter-spacing:-0.2px;white-space:nowrap;">true</div><div style="position:absolute;left:496px;top:395px;width:548px;height:19px;background:#ebebeb;"></div><div style="position:absolute;left:496px;top:414px;width:548px;height:1px;background:#c9c9c9;"></div><div style="position:absolute;left:769px;top:395px;width:1px;height:19px;background:#d0d0d0;"></div><svg width="16" height="17" style="position:absolute;left:497px;top:397px"><path d="M0.5,0.5 L12.3,0.5 L15.5,3.7 L15.5,14.7 L13.5,16 L12,13.2 L10.5,12.2 L9,13.5 L7.7,12.2 L6,13.5 L4.5,12.4 L3,14 L1.5,12.8 L0.5,14.7 Z" fill="url(#gB)" stroke="#4cb84c" stroke-width="1"/><path d="M12.3,0.5 L12.3,3.7 L15.5,3.7 Z" fill="#ffffff" fill-opacity=".55" stroke="#4cb84c" stroke-width="0.8"/><path d="M2.5,10 L7.5,5.5 M9.3,8.3 Q9.6,9.6 13,9.6" stroke="#0b7a0b" stroke-width="1.6" fill="none"/></svg><div style="position:absolute;left:517px;top:399.86px;font-size:11px;line-height:11px;color:#000;font-weight:400;letter-spacing:-0.2px;white-space:nowrap;">Show Trend Analysis Dashboard</div><div style="position:absolute;left:773px;top:399.86px;font-size:11px;line-height:11px;color:#000;font-weight:400;letter-spacing:-0.2px;white-space:nowrap;">true</div><div style="position:absolute;left:496px;top:415px;width:548px;height:19px;background:#ffffff;"></div><div style="position:absolute;left:496px;top:434px;width:548px;height:1px;background:#c9c9c9;"></div><div style="position:absolute;left:769px;top:415px;width:1px;height:19px;background:#d0d0d0;"></div><svg width="16" height="17" style="position:absolute;left:497px;top:417px"><path d="M0.5,0.5 L12.3,0.5 L15.5,3.7 L15.5,14.7 L13.5,16 L12,13.2 L10.5,12.2 L9,13.5 L7.7,12.2 L6,13.5 L4.5,12.4 L3,14 L1.5,12.8 L0.5,14.7 Z" fill="url(#gI)" stroke="#6a9bd4" stroke-width="1"/><path d="M12.3,0.5 L12.3,3.7 L15.5,3.7 Z" fill="#ffffff" fill-opacity=".55" stroke="#6a9bd4" stroke-width="0.8"/><text x="2" y="10.8" font-family="Liberation Sans" font-size="7.2" font-weight="700" fill="#0a2a50" letter-spacing="-0.3">123</text></svg><div style="position:absolute;left:517px;top:419.86px;font-size:11px;line-height:11px;color:#000;font-weight:400;letter-spacing:-0.2px;white-space:nowrap;">Dashboard Position</div><div style="position:absolute;left:773px;top:419.86px;font-size:11px;line-height:11px;color:#000;font-weight:400;letter-spacing:-0.2px;white-space:nowrap;">Bottom Right</div><div style="position:absolute;left:496px;top:435px;width:548px;height:19px;background:#ebebeb;"></div><div style="position:absolute;left:496px;top:454px;width:548px;height:1px;background:#c9c9c9;"></div><div style="position:absolute;left:769px;top:435px;width:1px;height:19px;background:#d0d0d0;"></div><svg width="16" height="17" style="position:absolute;left:497px;top:437px"><path d="M0.5,0.5 L12.3,0.5 L15.5,3.7 L15.5,14.7 L13.5,16 L12,13.2 L10.5,12.2 L9,13.5 L7.7,12.2 L6,13.5 L4.5,12.4 L3,14 L1.5,12.8 L0.5,14.7 Z" fill="url(#gI)" stroke="#6a9bd4" stroke-width="1"/><path d="M12.3,0.5 L12.3,3.7 L15.5,3.7 Z" fill="#ffffff" fill-opacity=".55" stroke="#6a9bd4" stroke-width="0.8"/><text x="2" y="10.8" font-family="Liberation Sans" font-size="7.2" font-weight="700" fill="#0a2a50" letter-spacing="-0.3">123</text></svg><div style="position:absolute;left:517px;top:439.86px;font-size:11px;line-height:11px;color:#000;font-weight:400;letter-spacing:-0.2px;white-space:nowrap;">Combined Trend TF 1</div><div style="position:absolute;left:773px;top:439.86px;font-size:11px;line-height:11px;color:#000;font-weight:400;letter-spacing:-0.2px;white-space:nowrap;">5 Min</div><div style="position:absolute;left:496px;top:455px;width:548px;height:19px;background:#ffffff;"></div><div style="position:absolute;left:496px;top:474px;width:548px;height:1px;background:#c9c9c9;"></div><div style="position:absolute;left:769px;top:455px;width:1px;height:19px;background:#d0d0d0;"></div><svg width="16" height="17" style="position:absolute;left:497px;top:457px"><path d="M0.5,0.5 L12.3,0.5 L15.5,3.7 L15.5,14.7 L13.5,16 L12,13.2 L10.5,12.2 L9,13.5 L7.7,12.2 L6,13.5 L4.5,12.4 L3,14 L1.5,12.8 L0.5,14.7 Z" fill="url(#gI)" stroke="#6a9bd4" stroke-width="1"/><path d="M12.3,0.5 L12.3,3.7 L15.5,3.7 Z" fill="#ffffff" fill-opacity=".55" stroke="#6a9bd4" stroke-width="0.8"/><text x="2" y="10.8" font-family="Liberation Sans" font-size="7.2" font-weight="700" fill="#0a2a50" letter-spacing="-0.3">123</text></svg><div style="position:absolute;left:517px;top:459.86px;font-size:11px;line-height:11px;color:#000;font-weight:400;letter-spacing:-0.2px;white-space:nowrap;">Combined Trend TF 2</div><div style="position:absolute;left:773px;top:459.86px;font-size:11px;line-height:11px;color:#000;font-weight:400;letter-spacing:-0.2px;white-space:nowrap;">15 Min</div><div style="position:absolute;left:496px;top:475px;width:548px;height:19px;background:#ebebeb;"></div><div style="position:absolute;left:496px;top:494px;width:548px;height:1px;background:#c9c9c9;"></div><div style="position:absolute;left:769px;top:475px;width:1px;height:19px;background:#d0d0d0;"></div><svg width="16" height="17" style="position:absolute;left:497px;top:477px"><path d="M0.5,0.5 L12.3,0.5 L15.5,3.7 L15.5,14.7 L13.5,16 L12,13.2 L10.5,12.2 L9,13.5 L7.7,12.2 L6,13.5 L4.5,12.4 L3,14 L1.5,12.8 L0.5,14.7 Z" fill="url(#gI)" stroke="#6a9bd4" stroke-width="1"/><path d="M12.3,0.5 L12.3,3.7 L15.5,3.7 Z" fill="#ffffff" fill-opacity=".55" stroke="#6a9bd4" stroke-width="0.8"/><text x="2" y="10.8" font-family="Liberation Sans" font-size="7.2" font-weight="700" fill="#0a2a50" letter-spacing="-0.3">123</text></svg><div style="position:absolute;left:517px;top:479.86px;font-size:11px;line-height:11px;color:#000;font-weight:400;letter-spacing:-0.2px;white-space:nowrap;">Combined Trend TF 3</div><div style="position:absolute;left:773px;top:479.86px;font-size:11px;line-height:11px;color:#000;font-weight:400;letter-spacing:-0.2px;white-space:nowrap;">30 Min</div><div style="position:absolute;left:496px;top:495px;width:548px;height:19px;background:#ffffff;"></div><div style="position:absolute;left:496px;top:514px;width:548px;height:1px;background:#c9c9c9;"></div><div style="position:absolute;left:769px;top:495px;width:1px;height:19px;background:#d0d0d0;"></div><svg width="16" height="17" style="position:absolute;left:497px;top:497px"><path d="M0.5,0.5 L12.3,0.5 L15.5,3.7 L15.5,14.7 L13.5,16 L12,13.2 L10.5,12.2 L9,13.5 L7.7,12.2 L6,13.5 L4.5,12.4 L3,14 L1.5,12.8 L0.5,14.7 Z" fill="#f6f6f6" stroke="#707070" stroke-width="1"/><path d="M12.3,0.5 L12.3,3.7 L15.5,3.7 Z" fill="#ffffff" fill-opacity=".55" stroke="#707070" stroke-width="0.8"/><rect x="2.5" y="6" width="10" height="4.5" fill="url(#gC)"/></svg><div style="position:absolute;left:517px;top:499.86px;font-size:11px;line-height:11px;color:#000;font-weight:400;letter-spacing:-0.2px;white-space:nowrap;">Widget Border Color</div><div style="position:absolute;left:773px;top:498px;width:13px;height:13px;background:#000;box-sizing:border-box;border:1px solid #808080"></div><div style="position:absolute;left:789px;top:499.86px;font-size:11px;line-height:11px;color:#000;font-weight:400;letter-spacing:-0.2px;white-space:nowrap;">Black</div><div style="position:absolute;left:496px;top:515px;width:548px;height:19px;background:#ebebeb;"></div><div style="position:absolute;left:496px;top:534px;width:548px;height:1px;background:#c9c9c9;"></div><div style="position:absolute;left:769px;top:515px;width:1px;height:19px;background:#d0d0d0;"></div><svg width="16" height="17" style="position:absolute;left:497px;top:517px"><path d="M0.5,0.5 L12.3,0.5 L15.5,3.7 L15.5,14.7 L13.5,16 L12,13.2 L10.5,12.2 L9,13.5 L7.7,12.2 L6,13.5 L4.5,12.4 L3,14 L1.5,12.8 L0.5,14.7 Z" fill="url(#gB)" stroke="#4cb84c" stroke-width="1"/><path d="M12.3,0.5 L12.3,3.7 L15.5,3.7 Z" fill="#ffffff" fill-opacity=".55" stroke="#4cb84c" stroke-width="0.8"/><path d="M2.5,10 L7.5,5.5 M9.3,8.3 Q9.6,9.6 13,9.6" stroke="#0b7a0b" stroke-width="1.6" fill="none"/></svg><div style="position:absolute;left:517px;top:519.86px;font-size:11px;line-height:11px;color:#000;font-weight:400;letter-spacing:-0.2px;white-space:nowrap;">Show Screener</div><div style="position:absolute;left:773px;top:519.86px;font-size:11px;line-height:11px;color:#000;font-weight:400;letter-spacing:-0.2px;white-space:nowrap;">true</div><div style="position:absolute;left:496px;top:535px;width:548px;height:19px;background:#ffffff;"></div><div style="position:absolute;left:496px;top:554px;width:548px;height:1px;background:#c9c9c9;"></div><div style="position:absolute;left:769px;top:535px;width:1px;height:19px;background:#d0d0d0;"></div><svg width="16" height="17" style="position:absolute;left:497px;top:537px"><path d="M0.5,0.5 L12.3,0.5 L15.5,3.7 L15.5,14.7 L13.5,16 L12,13.2 L10.5,12.2 L9,13.5 L7.7,12.2 L6,13.5 L4.5,12.4 L3,14 L1.5,12.8 L0.5,14.7 Z" fill="url(#gI)" stroke="#6a9bd4" stroke-width="1"/><path d="M12.3,0.5 L12.3,3.7 L15.5,3.7 Z" fill="#ffffff" fill-opacity=".55" stroke="#6a9bd4" stroke-width="0.8"/><text x="2" y="10.8" font-family="Liberation Sans" font-size="7.2" font-weight="700" fill="#0a2a50" letter-spacing="-0.3">123</text></svg><div style="position:absolute;left:517px;top:539.86px;font-size:11px;line-height:11px;color:#000;font-weight:400;letter-spacing:-0.2px;white-space:nowrap;">Screener Position</div><div style="position:absolute;left:773px;top:539.86px;font-size:11px;line-height:11px;color:#000;font-weight:400;letter-spacing:-0.2px;white-space:nowrap;">Top Right</div><div style="position:absolute;left:496px;top:555px;width:548px;height:19px;background:#ebebeb;"></div><div style="position:absolute;left:496px;top:574px;width:548px;height:1px;background:#c9c9c9;"></div><div style="position:absolute;left:769px;top:555px;width:1px;height:19px;background:#d0d0d0;"></div><svg width="16" height="17" style="position:absolute;left:497px;top:557px"><path d="M0.5,0.5 L12.3,0.5 L15.5,3.7 L15.5,14.7 L13.5,16 L12,13.2 L10.5,12.2 L9,13.5 L7.7,12.2 L6,13.5 L4.5,12.4 L3,14 L1.5,12.8 L0.5,14.7 Z" fill="url(#gI)" stroke="#6a9bd4" stroke-width="1"/><path d="M12.3,0.5 L12.3,3.7 L15.5,3.7 Z" fill="#ffffff" fill-opacity=".55" stroke="#6a9bd4" stroke-width="0.8"/><text x="2" y="10.8" font-family="Liberation Sans" font-size="7.2" font-weight="700" fill="#0a2a50" letter-spacing="-0.3">123</text></svg><div style="position:absolute;left:517px;top:559.86px;font-size:11px;line-height:11px;color:#000;font-weight:400;letter-spacing:-0.2px;white-space:nowrap;">Max Symbols (1..9)</div><div style="position:absolute;left:773px;top:559.86px;font-size:11px;line-height:11px;color:#000;font-weight:400;letter-spacing:-0.2px;white-space:nowrap;">9</div><div style="position:absolute;left:496px;top:575px;width:548px;height:19px;background:#ffffff;"></div><div style="position:absolute;left:496px;top:594px;width:548px;height:1px;background:#c9c9c9;"></div><div style="position:absolute;left:769px;top:575px;width:1px;height:19px;background:#d0d0d0;"></div><svg width="16" height="17" style="position:absolute;left:497px;top:577px"><path d="M0.5,0.5 L12.3,0.5 L15.5,3.7 L15.5,14.7 L13.5,16 L12,13.2 L10.5,12.2 L9,13.5 L7.7,12.2 L6,13.5 L4.5,12.4 L3,14 L1.5,12.8 L0.5,14.7 Z" fill="url(#gS)" stroke="#c9b94a" stroke-width="1"/><path d="M12.3,0.5 L12.3,3.7 L15.5,3.7 Z" fill="#ffffff" fill-opacity=".55" stroke="#c9b94a" stroke-width="0.8"/><text x="2" y="10.8" font-family="Liberation Sans" font-size="8.5" font-weight="700" fill="#4a4000" letter-spacing="-0.3">ab</text></svg><div style="position:absolute;left:517px;top:579.86px;font-size:11px;line-height:11px;color:#000;font-weight:400;letter-spacing:-0.2px;white-space:nowrap;">Symbol 1</div><div style="position:absolute;left:773px;top:579.86px;font-size:11px;line-height:11px;color:#000;font-weight:400;letter-spacing:-0.2px;white-space:nowrap;">EURUSD</div><div style="position:absolute;left:496px;top:595px;width:548px;height:19px;background:#ebebeb;"></div><div style="position:absolute;left:496px;top:614px;width:548px;height:1px;background:#c9c9c9;"></div><div style="position:absolute;left:769px;top:595px;width:1px;height:19px;background:#d0d0d0;"></div><svg width="16" height="17" style="position:absolute;left:497px;top:597px"><path d="M0.5,0.5 L12.3,0.5 L15.5,3.7 L15.5,14.7 L13.5,16 L12,13.2 L10.5,12.2 L9,13.5 L7.7,12.2 L6,13.5 L4.5,12.4 L3,14 L1.5,12.8 L0.5,14.7 Z" fill="url(#gS)" stroke="#c9b94a" stroke-width="1"/><path d="M12.3,0.5 L12.3,3.7 L15.5,3.7 Z" fill="#ffffff" fill-opacity=".55" stroke="#c9b94a" stroke-width="0.8"/><text x="2" y="10.8" font-family="Liberation Sans" font-size="8.5" font-weight="700" fill="#4a4000" letter-spacing="-0.3">ab</text></svg><div style="position:absolute;left:517px;top:599.86px;font-size:11px;line-height:11px;color:#000;font-weight:400;letter-spacing:-0.2px;white-space:nowrap;">Symbol 2</div><div style="position:absolute;left:773px;top:599.86px;font-size:11px;line-height:11px;color:#000;font-weight:400;letter-spacing:-0.2px;white-space:nowrap;">GBPUSD</div><div style="position:absolute;left:496px;top:615px;width:548px;height:19px;background:#ffffff;"></div><div style="position:absolute;left:496px;top:634px;width:548px;height:1px;background:#c9c9c9;"></div><div style="position:absolute;left:769px;top:615px;width:1px;height:19px;background:#d0d0d0;"></div><svg width="16" height="17" style="position:absolute;left:497px;top:617px"><path d="M0.5,0.5 L12.3,0.5 L15.5,3.7 L15.5,14.7 L13.5,16 L12,13.2 L10.5,12.2 L9,13.5 L7.7,12.2 L6,13.5 L4.5,12.4 L3,14 L1.5,12.8 L0.5,14.7 Z" fill="url(#gS)" stroke="#c9b94a" stroke-width="1"/><path d="M12.3,0.5 L12.3,3.7 L15.5,3.7 Z" fill="#ffffff" fill-opacity=".55" stroke="#c9b94a" stroke-width="0.8"/><text x="2" y="10.8" font-family="Liberation Sans" font-size="8.5" font-weight="700" fill="#4a4000" letter-spacing="-0.3">ab</text></svg><div style="position:absolute;left:517px;top:619.86px;font-size:11px;line-height:11px;color:#000;font-weight:400;letter-spacing:-0.2px;white-space:nowrap;">Symbol 3</div><div style="position:absolute;left:773px;top:619.86px;font-size:11px;line-height:11px;color:#000;font-weight:400;letter-spacing:-0.2px;white-space:nowrap;">USDJPY</div><div style="position:absolute;left:496px;top:635px;width:548px;height:19px;background:#ebebeb;"></div><div style="position:absolute;left:496px;top:654px;width:548px;height:1px;background:#c9c9c9;"></div><div style="position:absolute;left:769px;top:635px;width:1px;height:19px;background:#d0d0d0;"></div><svg width="16" height="17" style="position:absolute;left:497px;top:637px"><path d="M0.5,0.5 L12.3,0.5 L15.5,3.7 L15.5,14.7 L13.5,16 L12,13.2 L10.5,12.2 L9,13.5 L7.7,12.2 L6,13.5 L4.5,12.4 L3,14 L1.5,12.8 L0.5,14.7 Z" fill="url(#gS)" stroke="#c9b94a" stroke-width="1"/><path d="M12.3,0.5 L12.3,3.7 L15.5,3.7 Z" fill="#ffffff" fill-opacity=".55" stroke="#c9b94a" stroke-width="0.8"/><text x="2" y="10.8" font-family="Liberation Sans" font-size="8.5" font-weight="700" fill="#4a4000" letter-spacing="-0.3">ab</text></svg><div style="position:absolute;left:517px;top:639.86px;font-size:11px;line-height:11px;color:#000;font-weight:400;letter-spacing:-0.2px;white-space:nowrap;">Symbol 4</div><div style="position:absolute;left:773px;top:639.86px;font-size:11px;line-height:11px;color:#000;font-weight:400;letter-spacing:-0.2px;white-space:nowrap;">USDCHF</div><div style="position:absolute;left:496px;top:655px;width:548px;height:19px;background:#ffffff;"></div><div style="position:absolute;left:496px;top:674px;width:548px;height:1px;background:#c9c9c9;"></div><div style="position:absolute;left:769px;top:655px;width:1px;height:19px;background:#d0d0d0;"></div><svg width="16" height="17" style="position:absolute;left:497px;top:657px"><path d="M0.5,0.5 L12.3,0.5 L15.5,3.7 L15.5,14.7 L13.5,16 L12,13.2 L10.5,12.2 L9,13.5 L7.7,12.2 L6,13.5 L4.5,12.4 L3,14 L1.5,12.8 L0.5,14.7 Z" fill="url(#gS)" stroke="#c9b94a" stroke-width="1"/><path d="M12.3,0.5 L12.3,3.7 L15.5,3.7 Z" fill="#ffffff" fill-opacity=".55" stroke="#c9b94a" stroke-width="0.8"/><text x="2" y="10.8" font-family="Liberation Sans" font-size="8.5" font-weight="700" fill="#4a4000" letter-spacing="-0.3">ab</text></svg><div style="position:absolute;left:517px;top:659.86px;font-size:11px;line-height:11px;color:#000;font-weight:400;letter-spacing:-0.2px;white-space:nowrap;">Symbol 5</div><div style="position:absolute;left:773px;top:659.86px;font-size:11px;line-height:11px;color:#000;font-weight:400;letter-spacing:-0.2px;white-space:nowrap;">AUDUSD</div><div style="position:absolute;left:496px;top:675px;width:548px;height:19px;background:#ebebeb;"></div><div style="position:absolute;left:496px;top:694px;width:548px;height:1px;background:#c9c9c9;"></div><div style="position:absolute;left:769px;top:675px;width:1px;height:19px;background:#d0d0d0;"></div><svg width="16" height="17" style="position:absolute;left:497px;top:677px"><path d="M0.5,0.5 L12.3,0.5 L15.5,3.7 L15.5,14.7 L13.5,16 L12,13.2 L10.5,12.2 L9,13.5 L7.7,12.2 L6,13.5 L4.5,12.4 L3,14 L1.5,12.8 L0.5,14.7 Z" fill="url(#gS)" stroke="#c9b94a" stroke-width="1"/><path d="M12.3,0.5 L12.3,3.7 L15.5,3.7 Z" fill="#ffffff" fill-opacity=".55" stroke="#c9b94a" stroke-width="0.8"/><text x="2" y="10.8" font-family="Liberation Sans" font-size="8.5" font-weight="700" fill="#4a4000" letter-spacing="-0.3">ab</text></svg><div style="position:absolute;left:517px;top:679.86px;font-size:11px;line-height:11px;color:#000;font-weight:400;letter-spacing:-0.2px;white-space:nowrap;">Symbol 6</div><div style="position:absolute;left:773px;top:679.86px;font-size:11px;line-height:11px;color:#000;font-weight:400;letter-spacing:-0.2px;white-space:nowrap;">NZDUSD</div><div style="position:absolute;left:496px;top:695px;width:548px;height:19px;background:#ffffff;"></div><div style="position:absolute;left:496px;top:714px;width:548px;height:1px;background:#c9c9c9;"></div><div style="position:absolute;left:769px;top:695px;width:1px;height:19px;background:#d0d0d0;"></div><svg width="16" height="17" style="position:absolute;left:497px;top:697px"><path d="M0.5,0.5 L12.3,0.5 L15.5,3.7 L15.5,14.7 L13.5,16 L12,13.2 L10.5,12.2 L9,13.5 L7.7,12.2 L6,13.5 L4.5,12.4 L3,14 L1.5,12.8 L0.5,14.7 Z" fill="url(#gS)" stroke="#c9b94a" stroke-width="1"/><path d="M12.3,0.5 L12.3,3.7 L15.5,3.7 Z" fill="#ffffff" fill-opacity=".55" stroke="#c9b94a" stroke-width="0.8"/><text x="2" y="10.8" font-family="Liberation Sans" font-size="8.5" font-weight="700" fill="#4a4000" letter-spacing="-0.3">ab</text></svg><div style="position:absolute;left:517px;top:699.86px;font-size:11px;line-height:11px;color:#000;font-weight:400;letter-spacing:-0.2px;white-space:nowrap;">Symbol 7</div><div style="position:absolute;left:773px;top:699.86px;font-size:11px;line-height:11px;color:#000;font-weight:400;letter-spacing:-0.2px;white-space:nowrap;">USDCAD</div><div style="position:absolute;left:496px;top:715px;width:548px;height:19px;background:#ebebeb;"></div><div style="position:absolute;left:496px;top:734px;width:548px;height:1px;background:#c9c9c9;"></div><div style="position:absolute;left:769px;top:715px;width:1px;height:19px;background:#d0d0d0;"></div><svg width="16" height="17" style="position:absolute;left:497px;top:717px"><path d="M0.5,0.5 L12.3,0.5 L15.5,3.7 L15.5,14.7 L13.5,16 L12,13.2 L10.5,12.2 L9,13.5 L7.7,12.2 L6,13.5 L4.5,12.4 L3,14 L1.5,12.8 L0.5,14.7 Z" fill="url(#gS)" stroke="#c9b94a" stroke-width="1"/><path d="M12.3,0.5 L12.3,3.7 L15.5,3.7 Z" fill="#ffffff" fill-opacity=".55" stroke="#c9b94a" stroke-width="0.8"/><text x="2" y="10.8" font-family="Liberation Sans" font-size="8.5" font-weight="700" fill="#4a4000" letter-spacing="-0.3">ab</text></svg><div style="position:absolute;left:517px;top:719.86px;font-size:11px;line-height:11px;color:#000;font-weight:400;letter-spacing:-0.2px;white-space:nowrap;">Symbol 8</div><div style="position:absolute;left:773px;top:719.86px;font-size:11px;line-height:11px;color:#000;font-weight:400;letter-spacing:-0.2px;white-space:nowrap;">EURJPY</div><div style="position:absolute;left:496px;top:735px;width:548px;height:19px;background:#ffffff;"></div><div style="position:absolute;left:496px;top:754px;width:548px;height:1px;background:#c9c9c9;"></div><div style="position:absolute;left:769px;top:735px;width:1px;height:19px;background:#d0d0d0;"></div><svg width="16" height="17" style="position:absolute;left:497px;top:737px"><path d="M0.5,0.5 L12.3,0.5 L15.5,3.7 L15.5,14.7 L13.5,16 L12,13.2 L10.5,12.2 L9,13.5 L7.7,12.2 L6,13.5 L4.5,12.4 L3,14 L1.5,12.8 L0.5,14.7 Z" fill="url(#gS)" stroke="#c9b94a" stroke-width="1"/><path d="M12.3,0.5 L12.3,3.7 L15.5,3.7 Z" fill="#ffffff" fill-opacity=".55" stroke="#c9b94a" stroke-width="0.8"/><text x="2" y="10.8" font-family="Liberation Sans" font-size="8.5" font-weight="700" fill="#4a4000" letter-spacing="-0.3">ab</text></svg><div style="position:absolute;left:517px;top:739.86px;font-size:11px;line-height:11px;color:#000;font-weight:400;letter-spacing:-0.2px;white-space:nowrap;">Symbol 9</div><div style="position:absolute;left:773px;top:739.86px;font-size:11px;line-height:11px;color:#000;font-weight:400;letter-spacing:-0.2px;white-space:nowrap;">GBPJPY</div><div style="position:absolute;left:496px;top:755px;width:548px;height:19px;background:#ebebeb;"></div><div style="position:absolute;left:496px;top:774px;width:548px;height:1px;background:#c9c9c9;"></div><div style="position:absolute;left:769px;top:755px;width:1px;height:19px;background:#d0d0d0;"></div><svg width="16" height="17" style="position:absolute;left:497px;top:757px"><path d="M0.5,0.5 L12.3,0.5 L15.5,3.7 L15.5,14.7 L13.5,16 L12,13.2 L10.5,12.2 L9,13.5 L7.7,12.2 L6,13.5 L4.5,12.4 L3,14 L1.5,12.8 L0.5,14.7 Z" fill="url(#gB)" stroke="#4cb84c" stroke-width="1"/><path d="M12.3,0.5 L12.3,3.7 L15.5,3.7 Z" fill="#ffffff" fill-opacity=".55" stroke="#4cb84c" stroke-width="0.8"/><path d="M2.5,10 L7.5,5.5 M9.3,8.3 Q9.6,9.6 13,9.6" stroke="#0b7a0b" stroke-width="1.6" fill="none"/></svg><div style="position:absolute;left:517px;top:759.86px;font-size:11px;line-height:11px;color:#000;font-weight:400;letter-spacing:-0.2px;white-space:nowrap;">Popup Alert</div><div style="position:absolute;left:773px;top:759.86px;font-size:11px;line-height:11px;color:#000;font-weight:400;letter-spacing:-0.2px;white-space:nowrap;">true</div><div style="position:absolute;left:496px;top:775px;width:548px;height:19px;background:#ffffff;"></div><div style="position:absolute;left:496px;top:794px;width:548px;height:1px;background:#c9c9c9;"></div><div style="position:absolute;left:769px;top:775px;width:1px;height:19px;background:#d0d0d0;"></div><svg width="16" height="17" style="position:absolute;left:497px;top:777px"><path d="M0.5,0.5 L12.3,0.5 L15.5,3.7 L15.5,14.7 L13.5,16 L12,13.2 L10.5,12.2 L9,13.5 L7.7,12.2 L6,13.5 L4.5,12.4 L3,14 L1.5,12.8 L0.5,14.7 Z" fill="url(#gB)" stroke="#4cb84c" stroke-width="1"/><path d="M12.3,0.5 L12.3,3.7 L15.5,3.7 Z" fill="#ffffff" fill-opacity=".55" stroke="#4cb84c" stroke-width="0.8"/><path d="M2.5,10 L7.5,5.5 M9.3,8.3 Q9.6,9.6 13,9.6" stroke="#0b7a0b" stroke-width="1.6" fill="none"/></svg><div style="position:absolute;left:517px;top:779.86px;font-size:11px;line-height:11px;color:#000;font-weight:400;letter-spacing:-0.2px;white-space:nowrap;">Sound Alert</div><div style="position:absolute;left:773px;top:779.86px;font-size:11px;line-height:11px;color:#000;font-weight:400;letter-spacing:-0.2px;white-space:nowrap;">true</div><div style="position:absolute;left:496px;top:795px;width:548px;height:19px;background:#ebebeb;"></div><div style="position:absolute;left:496px;top:814px;width:548px;height:1px;background:#c9c9c9;"></div><div style="position:absolute;left:769px;top:795px;width:1px;height:19px;background:#d0d0d0;"></div><svg width="16" height="17" style="position:absolute;left:497px;top:797px"><path d="M0.5,0.5 L12.3,0.5 L15.5,3.7 L15.5,14.7 L13.5,16 L12,13.2 L10.5,12.2 L9,13.5 L7.7,12.2 L6,13.5 L4.5,12.4 L3,14 L1.5,12.8 L0.5,14.7 Z" fill="url(#gB)" stroke="#4cb84c" stroke-width="1"/><path d="M12.3,0.5 L12.3,3.7 L15.5,3.7 Z" fill="#ffffff" fill-opacity=".55" stroke="#4cb84c" stroke-width="0.8"/><path d="M2.5,10 L7.5,5.5 M9.3,8.3 Q9.6,9.6 13,9.6" stroke="#0b7a0b" stroke-width="1.6" fill="none"/></svg><div style="position:absolute;left:517px;top:799.86px;font-size:11px;line-height:11px;color:#000;font-weight:400;letter-spacing:-0.2px;white-space:nowrap;">Email Alert</div><div style="position:absolute;left:773px;top:799.86px;font-size:11px;line-height:11px;color:#000;font-weight:400;letter-spacing:-0.2px;white-space:nowrap;">false</div><div style="position:absolute;left:496px;top:815px;width:548px;height:19px;background:#ffffff;"></div><div style="position:absolute;left:496px;top:834px;width:548px;height:1px;background:#c9c9c9;"></div><div style="position:absolute;left:769px;top:815px;width:1px;height:19px;background:#d0d0d0;"></div><svg width="16" height="17" style="position:absolute;left:497px;top:817px"><path d="M0.5,0.5 L12.3,0.5 L15.5,3.7 L15.5,14.7 L13.5,16 L12,13.2 L10.5,12.2 L9,13.5 L7.7,12.2 L6,13.5 L4.5,12.4 L3,14 L1.5,12.8 L0.5,14.7 Z" fill="url(#gB)" stroke="#4cb84c" stroke-width="1"/><path d="M12.3,0.5 L12.3,3.7 L15.5,3.7 Z" fill="#ffffff" fill-opacity=".55" stroke="#4cb84c" stroke-width="0.8"/><path d="M2.5,10 L7.5,5.5 M9.3,8.3 Q9.6,9.6 13,9.6" stroke="#0b7a0b" stroke-width="1.6" fill="none"/></svg><div style="position:absolute;left:517px;top:819.86px;font-size:11px;line-height:11px;color:#000;font-weight:400;letter-spacing:-0.2px;white-space:nowrap;">Push Notification</div><div style="position:absolute;left:773px;top:819.86px;font-size:11px;line-height:11px;color:#000;font-weight:400;letter-spacing:-0.2px;white-space:nowrap;">false</div><div style="position:absolute;left:1054px;top:782px;width:103px;height:21px;background:#e1e1e1;box-sizing:border-box;border:1px solid #707070"></div><div style="position:absolute;left:905.5px;width:400px;text-align:center;top:787.86px;font-size:11px;line-height:11px;color:#000;font-weight:400;letter-spacing:-0.1px;white-space:nowrap">Load</div><div style="position:absolute;left:1054px;top:815px;width:103px;height:21px;background:#e1e1e1;box-sizing:border-box;border:1px solid #707070"></div><div style="position:absolute;left:905.5px;width:400px;text-align:center;top:820.86px;font-size:11px;line-height:11px;color:#000;font-weight:400;letter-spacing:-0.1px;white-space:nowrap">Save</div><div style="position:absolute;left:930px;top:853px;width:73px;height:21px;background:#e1e1e1;box-sizing:border-box;border:1px solid #3c7fb1"></div><div style="position:absolute;left:766.5px;width:400px;text-align:center;top:858.86px;font-size:11px;line-height:11px;color:#000;font-weight:400;letter-spacing:-0.1px;white-space:nowrap">OK</div><div style="position:absolute;left:1011px;top:853px;width:73px;height:21px;background:#e1e1e1;box-sizing:border-box;border:1px solid #707070"></div><div style="position:absolute;left:847.5px;width:400px;text-align:center;top:858.86px;font-size:11px;line-height:11px;color:#000;font-weight:400;letter-spacing:-0.1px;white-space:nowrap">Cancel</div><div style="position:absolute;left:1092px;top:853px;width:73px;height:21px;background:#e1e1e1;box-sizing:border-box;border:1px solid #707070"></div><div style="position:absolute;left:928.5px;width:400px;text-align:center;top:858.86px;font-size:11px;line-height:11px;color:#000;font-weight:400;letter-spacing:-0.1px;white-space:nowrap">Reset</div><div style="position:absolute;left:1170px;top:873px;width:2px;height:2px;background:#a8a8a8;"></div><div style="position:absolute;left:1170px;top:876px;width:2px;height:2px;background:#a8a8a8;"></div><div style="position:absolute;left:1170px;top:879px;width:2px;height:2px;background:#a8a8a8;"></div><div style="position:absolute;left:1167px;top:876px;width:2px;height:2px;background:#a8a8a8;"></div><div style="position:absolute;left:1167px;top:879px;width:2px;height:2px;background:#a8a8a8;"></div><div style="position:absolute;left:1164px;top:879px;width:2px;height:2px;background:#a8a8a8;"></div>
</body></html>
